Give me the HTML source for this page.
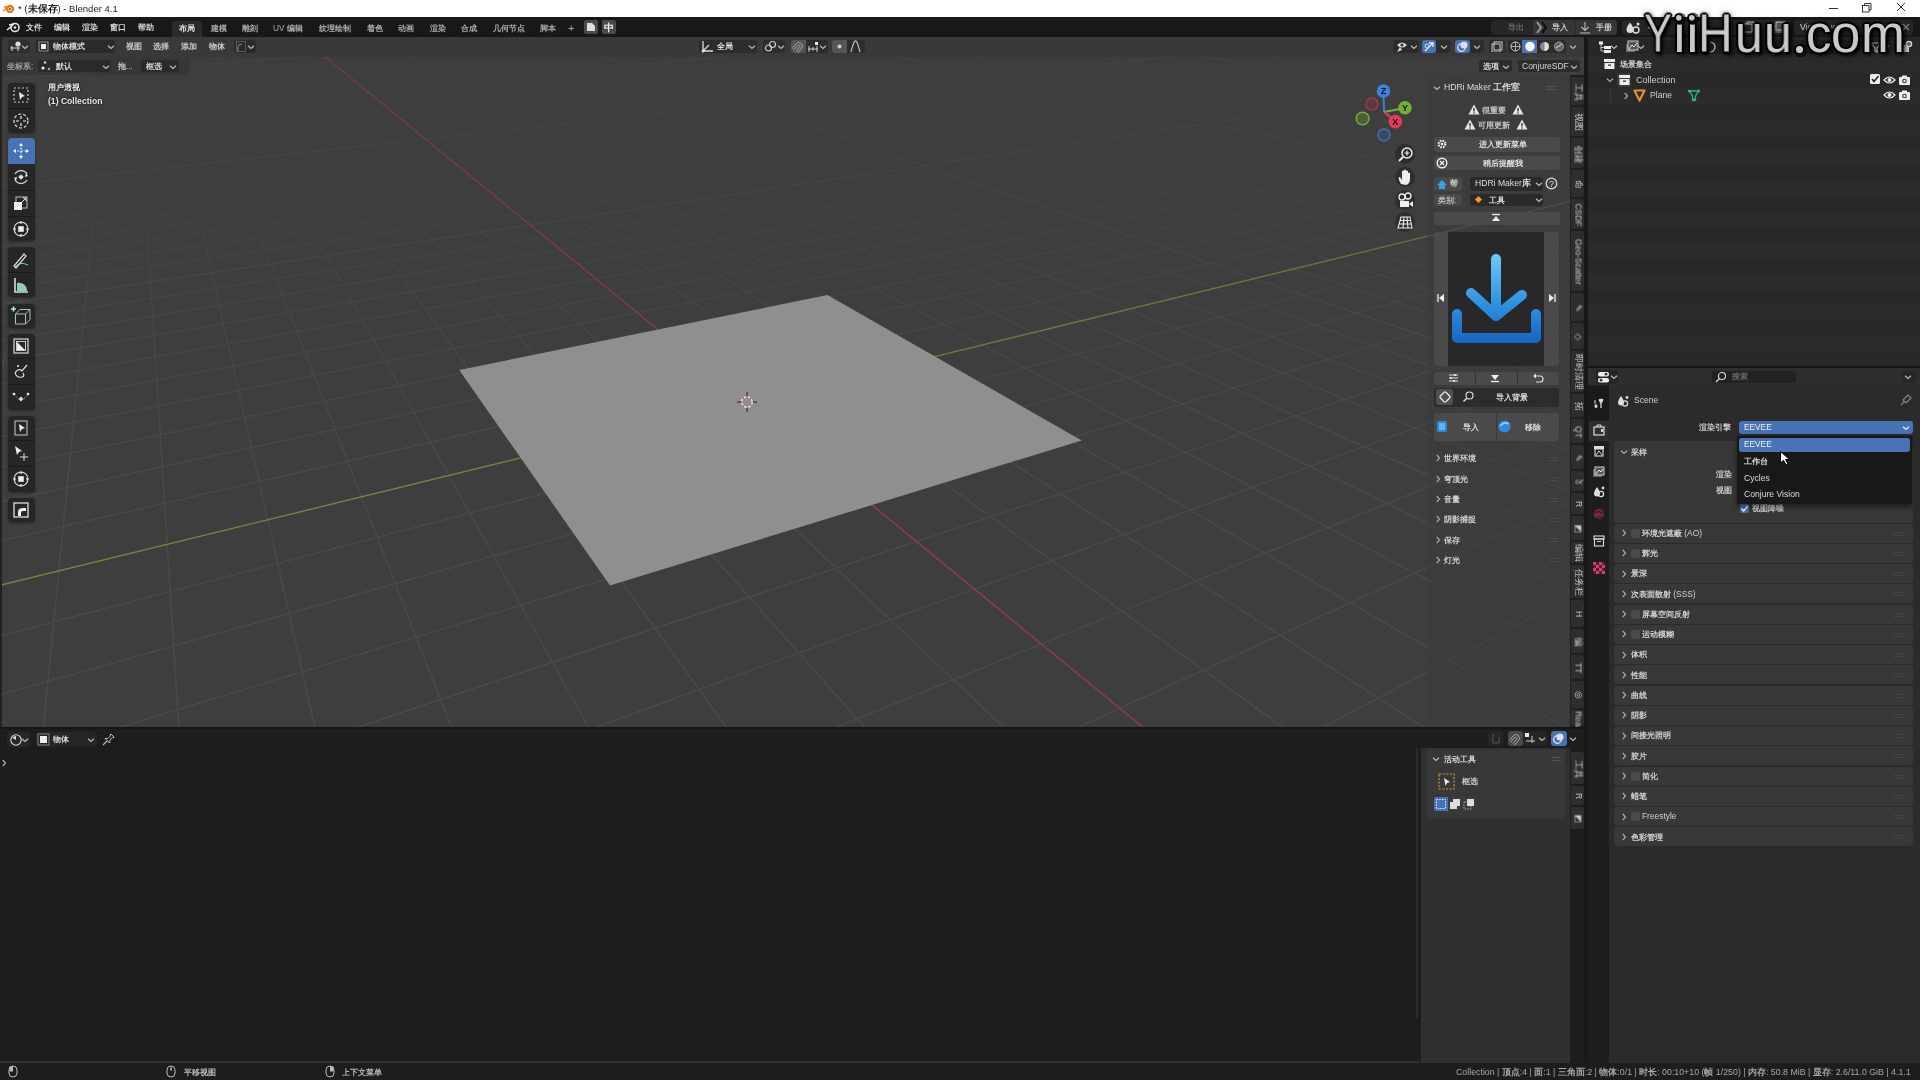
<!DOCTYPE html><html><head><meta charset="utf-8"><style>
html,body{margin:0;padding:0;width:1920px;height:1080px;overflow:hidden;background:#181818;font-family:"Liberation Sans",sans-serif;}
div,span,svg{position:absolute;}
.t{white-space:nowrap;line-height:1;will-change:transform;font-weight:500;}
.vt{writing-mode:vertical-rl;white-space:nowrap;line-height:1;position:absolute;}
</style></head><body>
<div style="left:0px;top:0px;width:1920px;height:17px;background:#ffffff;"></div>
<svg style="left:2px;top:2px;" width="14" height="13" viewBox="0 0 14 13"><circle cx="8" cy="7" r="4.2" fill="#e87d0d"/><circle cx="8" cy="7" r="1.8" fill="#fff"/><circle cx="8" cy="7" r="1.1" fill="#2a5d9c"/><path d="M1 9 L6 5 M2 5 L6 5" stroke="#e87d0d" stroke-width="1.6"/></svg>
<span class="t" style="left:18px;top:3.8px;font-size:9.5px;color:#1a1a1a;">* (<b style="font-weight:600">未保存</b>) - Blender 4.1</span>
<div style="left:1829px;top:8px;width:9px;height:1px;background:#333;"></div>
<svg style="left:1862px;top:3px;" width="10" height="10" viewBox="0 0 10 10"><rect x="0.5" y="2.5" width="6.5" height="6.5" fill="none" stroke="#333" stroke-width="1"/><path d="M2.5 2.5 V0.5 H9 V7 H7" fill="none" stroke="#333" stroke-width="1"/></svg>
<svg style="left:1896px;top:2px;" width="10" height="10" viewBox="0 0 10 10"><path d="M1 1 L9 9 M9 1 L1 9" stroke="#333" stroke-width="1"/></svg>
<div style="left:0px;top:17px;width:1920px;height:20px;background:#181818;"></div>
<svg style="left:6px;top:21px;" width="15" height="12" viewBox="0 0 15 12"><circle cx="9" cy="6.5" r="4" fill="none" stroke="#e6e6e6" stroke-width="1.6"/><circle cx="9" cy="6.5" r="1.3" fill="#e6e6e6"/><path d="M1 9 L7 4 M3 4 L8 3" stroke="#e6e6e6" stroke-width="1.5"/></svg>
<span class="t" style="left:26px;top:22.9px;font-size:8.3px;color:#d4d4d4;"><b style="font-weight:600">文件</b></span>
<span class="t" style="left:54px;top:22.9px;font-size:8.3px;color:#d4d4d4;"><b style="font-weight:600">编辑</b></span>
<span class="t" style="left:82px;top:22.9px;font-size:8.3px;color:#d4d4d4;"><b style="font-weight:600">渲染</b></span>
<span class="t" style="left:110px;top:22.9px;font-size:8.3px;color:#d4d4d4;"><b style="font-weight:600">窗口</b></span>
<span class="t" style="left:138px;top:22.9px;font-size:8.3px;color:#d4d4d4;"><b style="font-weight:600">帮助</b></span>
<div style="left:172px;top:21px;width:30px;height:16px;background:#2b2b2b;border-radius:3px 3px 0 0;"></div>
<span class="t" style="left:179px;top:23.9px;font-size:8.3px;color:#e0e0e0;"><b style="font-weight:600">布局</b></span>
<span class="t" style="left:211px;top:23.9px;font-size:8.3px;color:#a8a8a8;"><b style="font-weight:600">建模</b></span>
<span class="t" style="left:242px;top:23.9px;font-size:8.3px;color:#a8a8a8;"><b style="font-weight:600">雕刻</b></span>
<span class="t" style="left:273px;top:23.9px;font-size:8.3px;color:#a8a8a8;">UV <b style="font-weight:600">编辑</b></span>
<span class="t" style="left:319px;top:23.9px;font-size:8.3px;color:#a8a8a8;"><b style="font-weight:600">纹理绘制</b></span>
<span class="t" style="left:367px;top:23.9px;font-size:8.3px;color:#a8a8a8;"><b style="font-weight:600">着色</b></span>
<span class="t" style="left:398px;top:23.9px;font-size:8.3px;color:#a8a8a8;"><b style="font-weight:600">动画</b></span>
<span class="t" style="left:430px;top:23.9px;font-size:8.3px;color:#a8a8a8;"><b style="font-weight:600">渲染</b></span>
<span class="t" style="left:461px;top:23.9px;font-size:8.3px;color:#a8a8a8;"><b style="font-weight:600">合成</b></span>
<span class="t" style="left:493px;top:23.9px;font-size:8.3px;color:#a8a8a8;"><b style="font-weight:600">几何节点</b></span>
<span class="t" style="left:540px;top:23.9px;font-size:8.3px;color:#a8a8a8;"><b style="font-weight:600">脚本</b></span>
<span class="t" style="left:568px;top:22.5px;font-size:11px;color:#a8a8a8;">+</span>
<div style="left:584px;top:20px;width:14px;height:14px;background:#4a4a4a;border-radius:2px;"></div>
<svg style="left:586px;top:22px;" width="10" height="10" viewBox="0 0 10 10"><path d="M1 1 H6 L9 4 V9 H1 Z" fill="#ddd"/></svg>
<div style="left:602px;top:20px;width:14px;height:14px;background:#4a4a4a;border-radius:2px;"></div>
<span class="t" style="left:604px;top:22.5px;font-size:10px;color:#eee;"><b style="font-weight:600">中</b></span>
<div style="left:1491px;top:20px;width:126px;height:15px;background:#262626;border-radius:3px;"></div>
<div style="left:1533px;top:20px;width:84px;height:15px;background:#363636;border-radius:0 3px 3px 0;"></div>
<div style="left:1575px;top:20px;width:1px;height:15px;background:#2a2a2a;"></div>
<span class="t" style="left:1508px;top:22.9px;font-size:8.3px;color:#666;"><b style="font-weight:600">导出</b></span>
<svg style="left:1535px;top:20px;" width="14" height="15" viewBox="0 0 14 15"><path d="M2 2 L6 7.5 L2 13" stroke="#999" stroke-width="2" fill="none"/><path d="M7 2 L11 7.5 L7 13" stroke="#111" stroke-width="2.2" fill="none"/></svg>
<span class="t" style="left:1552px;top:22.9px;font-size:8.3px;color:#c8c8c8;"><b style="font-weight:600">导入</b></span>
<svg style="left:1579px;top:21px;" width="12" height="13" viewBox="0 0 12 13"><path d="M6 1 V9 M2.5 6 L6 9.5 L9.5 6 M1 12 H11" stroke="#bbb" stroke-width="1.1" fill="none"/></svg>
<span class="t" style="left:1596px;top:22.9px;font-size:8.3px;color:#c8c8c8;"><b style="font-weight:600">手册</b></span>
<div style="left:1622px;top:20px;width:38px;height:15px;background:#262626;border-radius:3px;"></div>
<svg style="left:1624px;top:21px;" width="20" height="13" viewBox="0 0 20 13"><path d="M6 1.5 Q9.5 6 9.5 8.5 A3.5 3.5 0 0 1 2.5 8.5 Q2.5 6 6 1.5 Z" fill="#ddd"/><circle cx="12" cy="9" r="3" fill="none" stroke="#ddd" stroke-width="1.3"/><circle cx="14" cy="3" r="1.5" fill="#ddd"/></svg>
<svg style="left:1647.0px;top:25.0px;" width="8" height="6" viewBox="0 0 8 6"><path d="M1 1.8 L4.0 4.5 L7 1.8" stroke="#bbb" stroke-width="1.2" fill="none"/></svg>
<div style="left:1664px;top:20px;width:36px;height:15px;background:#262626;border-radius:3px;"></div>
<div style="left:1704px;top:20px;width:86px;height:15px;background:#262626;border-radius:3px;"></div>
<svg style="left:1742px;top:21px;" width="13" height="13" viewBox="0 0 13 13"><rect x="2" y="3" width="8" height="8" fill="none" stroke="#bbb"/><path d="M5 3 V1 H12 V8 H10" fill="none" stroke="#bbb"/></svg>
<div style="left:1794px;top:20px;width:119px;height:15px;background:#262626;border-radius:3px;"></div>
<svg style="left:1773px;top:21px;" width="13" height="13" viewBox="0 0 13 13"><rect x="1" y="4" width="9" height="8" fill="#666"/><rect x="3" y="1" width="9" height="8" fill="#555" stroke="#ddd" stroke-width="0.9"/></svg>
<span class="t" style="left:1800px;top:23.2px;font-size:8.6px;color:#ddd;">ViewLayer</span>
<svg style="left:1901px;top:22px;" width="10" height="10" viewBox="0 0 10 10"><path d="M2 2 L8 8 M8 2 L2 8" stroke="#888" stroke-width="1.2"/></svg>
<div style="left:0px;top:37px;width:1587px;height:690px;background:#3e3e3e;"></div>
<svg width="1920" height="1080" style="position:absolute;left:0;top:0">
<defs>
<linearGradient id="fadeF" gradientUnits="userSpaceOnUse" x1="0" y1="37" x2="0" y2="727">
<stop offset="0" stop-color="#fff" stop-opacity="0"/><stop offset="0.16" stop-color="#fff" stop-opacity="0.15"/><stop offset="0.38" stop-color="#fff" stop-opacity="0.6"/><stop offset="0.6" stop-color="#fff" stop-opacity="0.95"/><stop offset="1" stop-color="#fff" stop-opacity="1"/></linearGradient>
<linearGradient id="fadeC" gradientUnits="userSpaceOnUse" x1="0" y1="37" x2="0" y2="500">
<stop offset="0" stop-color="#fff" stop-opacity="0.2"/><stop offset="0.5" stop-color="#fff" stop-opacity="0.55"/><stop offset="1" stop-color="#fff" stop-opacity="1"/></linearGradient>
<linearGradient id="fadeA" gradientUnits="userSpaceOnUse" x1="0" y1="37" x2="0" y2="500">
<stop offset="0" stop-color="#fff" stop-opacity="0.5"/><stop offset="1" stop-color="#fff" stop-opacity="1"/></linearGradient>
<mask id="mA"><rect x="0" y="0" width="1920" height="1080" fill="url(#fadeA)"/></mask>
<mask id="mF"><rect x="0" y="0" width="1920" height="1080" fill="url(#fadeF)"/></mask>
<mask id="mC"><rect x="0" y="0" width="1920" height="1080" fill="url(#fadeC)"/></mask>
<clipPath id="vc"><rect x="0" y="37" width="1587" height="690"/></clipPath></defs>
<g clip-path="url(#vc)">
<g mask="url(#mF)" stroke="#4a4a4a" stroke-width="1.5"><line x1="0.0" y1="37.7" x2="11.6" y2="37.0"/><line x1="0.0" y1="39.8" x2="44.8" y2="37.0"/><line x1="0.0" y1="41.9" x2="78.3" y2="37.0"/><line x1="0.0" y1="44.0" x2="112.0" y2="37.0"/><line x1="0.0" y1="46.3" x2="145.9" y2="37.0"/><line x1="0.0" y1="48.6" x2="180.0" y2="37.0"/><line x1="0.0" y1="53.4" x2="248.7" y2="37.0"/><line x1="0.0" y1="55.9" x2="283.5" y2="37.0"/><line x1="0.0" y1="58.6" x2="318.4" y2="37.0"/><line x1="0.0" y1="61.3" x2="353.5" y2="37.0"/><line x1="0.0" y1="64.0" x2="388.9" y2="37.0"/><line x1="0.0" y1="66.9" x2="424.5" y2="37.0"/><line x1="0.0" y1="69.9" x2="460.3" y2="37.0"/><line x1="0.0" y1="73.0" x2="496.3" y2="37.0"/><line x1="0.0" y1="76.2" x2="532.5" y2="37.0"/><line x1="0.0" y1="83.0" x2="605.7" y2="37.0"/><line x1="0.0" y1="86.5" x2="642.6" y2="37.0"/><line x1="0.0" y1="90.3" x2="679.8" y2="37.0"/><line x1="0.0" y1="94.1" x2="717.2" y2="37.0"/><line x1="0.0" y1="98.1" x2="754.8" y2="37.0"/><line x1="0.0" y1="102.3" x2="792.7" y2="37.0"/><line x1="0.0" y1="106.7" x2="830.8" y2="37.0"/><line x1="0.0" y1="111.2" x2="869.2" y2="37.0"/><line x1="0.0" y1="116.0" x2="907.8" y2="37.0"/><line x1="0.0" y1="126.1" x2="985.8" y2="37.0"/><line x1="0.0" y1="131.5" x2="1025.2" y2="37.0"/><line x1="0.0" y1="137.2" x2="1064.8" y2="37.0"/><line x1="0.0" y1="143.2" x2="1104.7" y2="37.0"/><line x1="0.0" y1="149.4" x2="1144.9" y2="37.0"/><line x1="0.0" y1="156.0" x2="1185.3" y2="37.0"/><line x1="0.0" y1="163.0" x2="1226.0" y2="37.0"/><line x1="0.0" y1="170.3" x2="1266.9" y2="37.0"/><line x1="0.0" y1="178.0" x2="1308.2" y2="37.0"/><line x1="0.0" y1="194.9" x2="1391.4" y2="37.0"/><line x1="0.0" y1="204.1" x2="1433.5" y2="37.0"/><line x1="0.0" y1="213.9" x2="1475.9" y2="37.0"/><line x1="0.0" y1="224.3" x2="1518.5" y2="37.0"/><line x1="0.0" y1="235.4" x2="1561.4" y2="37.0"/><line x1="0.0" y1="247.3" x2="1587.0" y2="39.3"/><line x1="0.0" y1="260.1" x2="1587.0" y2="45.3"/><line x1="0.0" y1="273.8" x2="1587.0" y2="51.7"/><line x1="0.0" y1="63.0" x2="19.3" y2="37.0"/><line x1="0.0" y1="288.6" x2="1587.0" y2="58.6"/><line x1="0.0" y1="109.5" x2="42.2" y2="37.0"/><line x1="0.0" y1="322.0" x2="1587.0" y2="74.2"/><line x1="0.0" y1="376.2" x2="88.4" y2="37.0"/><line x1="0.0" y1="340.9" x2="1587.0" y2="83.0"/><line x1="111.6" y1="37.0" x2="43.4" y2="727.0"/><line x1="0.0" y1="361.5" x2="1587.0" y2="92.7"/><line x1="135.0" y1="37.0" x2="178.8" y2="727.0"/><line x1="0.0" y1="384.2" x2="1587.0" y2="103.3"/><line x1="158.4" y1="37.0" x2="314.8" y2="727.0"/><line x1="0.0" y1="409.1" x2="1587.0" y2="114.9"/><line x1="181.9" y1="37.0" x2="451.3" y2="727.0"/><line x1="0.0" y1="436.8" x2="1587.0" y2="127.8"/><line x1="205.5" y1="37.0" x2="588.5" y2="727.0"/><line x1="0.0" y1="467.5" x2="1587.0" y2="142.2"/><line x1="229.3" y1="37.0" x2="726.1" y2="727.0"/><line x1="0.0" y1="502.0" x2="1587.0" y2="158.3"/><line x1="253.1" y1="37.0" x2="864.4" y2="727.0"/><line x1="0.0" y1="541.0" x2="1587.0" y2="176.5"/><line x1="277.0" y1="37.0" x2="1003.3" y2="727.0"/><line x1="0.0" y1="636.0" x2="1587.0" y2="220.9"/><line x1="325.1" y1="37.0" x2="1282.7" y2="727.0"/><line x1="0.0" y1="694.8" x2="1587.0" y2="248.4"/><line x1="349.4" y1="37.0" x2="1423.3" y2="727.0"/><line x1="1587.0" y1="280.6" x2="120.8" y2="727.0"/><line x1="373.7" y1="37.0" x2="1564.5" y2="727.0"/><line x1="1587.0" y1="318.9" x2="357.8" y2="727.0"/><line x1="1587.0" y1="664.0" x2="398.1" y2="37.0"/><line x1="1587.0" y1="365.2" x2="596.4" y2="727.0"/><line x1="1587.0" y1="600.3" x2="422.7" y2="37.0"/><line x1="1587.0" y1="422.3" x2="836.9" y2="727.0"/><line x1="1587.0" y1="546.2" x2="447.3" y2="37.0"/><line x1="1587.0" y1="494.4" x2="1079.1" y2="727.0"/><line x1="1587.0" y1="499.5" x2="472.1" y2="37.0"/><line x1="1587.0" y1="588.3" x2="1323.1" y2="727.0"/><line x1="1587.0" y1="458.9" x2="496.9" y2="37.0"/><line x1="1587.0" y1="715.8" x2="1568.9" y2="727.0"/><line x1="1587.0" y1="423.3" x2="521.9" y2="37.0"/><line x1="1587.0" y1="363.6" x2="572.1" y2="37.0"/><line x1="1587.0" y1="338.4" x2="597.4" y2="37.0"/><line x1="1587.0" y1="315.6" x2="622.8" y2="37.0"/><line x1="1587.0" y1="295.0" x2="648.3" y2="37.0"/><line x1="1587.0" y1="276.3" x2="673.9" y2="37.0"/><line x1="1587.0" y1="259.1" x2="699.7" y2="37.0"/><line x1="1587.0" y1="243.3" x2="725.5" y2="37.0"/><line x1="1587.0" y1="228.8" x2="751.5" y2="37.0"/><line x1="1587.0" y1="215.4" x2="777.5" y2="37.0"/><line x1="1587.0" y1="191.4" x2="830.0" y2="37.0"/><line x1="1587.0" y1="180.6" x2="856.4" y2="37.0"/><line x1="1587.0" y1="170.5" x2="883.0" y2="37.0"/><line x1="1587.0" y1="161.1" x2="909.6" y2="37.0"/><line x1="1587.0" y1="152.3" x2="936.4" y2="37.0"/><line x1="1587.0" y1="144.0" x2="963.3" y2="37.0"/><line x1="1587.0" y1="136.1" x2="990.3" y2="37.0"/><line x1="1587.0" y1="128.7" x2="1017.4" y2="37.0"/><line x1="1587.0" y1="121.8" x2="1044.7" y2="37.0"/><line x1="1587.0" y1="108.9" x2="1099.6" y2="37.0"/><line x1="1587.0" y1="102.9" x2="1127.2" y2="37.0"/><line x1="1587.0" y1="97.3" x2="1155.0" y2="37.0"/><line x1="1587.0" y1="91.9" x2="1182.8" y2="37.0"/><line x1="1587.0" y1="86.8" x2="1210.8" y2="37.0"/><line x1="1587.0" y1="81.9" x2="1239.0" y2="37.0"/><line x1="1587.0" y1="77.2" x2="1267.2" y2="37.0"/><line x1="1587.0" y1="72.8" x2="1295.6" y2="37.0"/><line x1="1587.0" y1="68.5" x2="1324.1" y2="37.0"/><line x1="1587.0" y1="60.5" x2="1381.6" y2="37.0"/><line x1="1587.0" y1="56.7" x2="1410.5" y2="37.0"/><line x1="1587.0" y1="53.1" x2="1439.6" y2="37.0"/><line x1="1587.0" y1="49.6" x2="1468.7" y2="37.0"/><line x1="1587.0" y1="46.3" x2="1498.1" y2="37.0"/><line x1="1587.0" y1="43.1" x2="1527.5" y2="37.0"/><line x1="1587.0" y1="40.0" x2="1557.1" y2="37.0"/><line x1="1587.0" y1="37.0" x2="1586.9" y2="37.0"/></g>
<g mask="url(#mC)" stroke="#4c4c4c" stroke-width="1.5"><line x1="0.0" y1="51.0" x2="214.2" y2="37.0"/><line x1="0.0" y1="79.5" x2="569.0" y2="37.0"/><line x1="0.0" y1="120.9" x2="946.7" y2="37.0"/><line x1="0.0" y1="186.2" x2="1349.7" y2="37.0"/><line x1="0.0" y1="304.6" x2="1587.0" y2="66.1"/><line x1="0.0" y1="191.8" x2="65.3" y2="37.0"/><line x1="1587.0" y1="391.7" x2="547.0" y2="37.0"/><line x1="1587.0" y1="203.0" x2="803.7" y2="37.0"/><line x1="1587.0" y1="115.2" x2="1072.1" y2="37.0"/><line x1="1587.0" y1="64.4" x2="1352.8" y2="37.0"/></g>
<g mask="url(#mA)"><line x1="301.0" y1="37.0" x2="1142.7" y2="727.0" stroke="#983a50" stroke-width="1.4"/><line x1="0.0" y1="585.2" x2="1587.0" y2="197.2" stroke="#74883e" stroke-width="1.4"/></g>
<polygon points="1081.7,440.5 610.0,585.6 459.2,370.0 827.5,295.0" fill="#8f8f8f"/>
</g></svg>
<div style="left:0px;top:37px;width:1587px;height:20px;background:#393939;"></div>
<div style="left:0px;top:57px;width:190px;height:18px;background:rgba(30,30,30,0.22);"></div>
<div style="left:8px;top:40px;width:22px;height:13px;background:#2e2e2e;border-radius:3px;"></div>
<svg style="left:9px;top:40px;" width="14" height="13" viewBox="0 0 14 13"><circle cx="9" cy="4" r="2.6" fill="#ddd"/><path d="M1 8 H11 M3 6 V11 M9 7 V11" stroke="#ccc" stroke-width="1.2"/></svg>
<svg style="left:21.0px;top:44.0px;" width="8" height="6" viewBox="0 0 8 6"><path d="M1 1.8 L4.0 4.5 L7 1.8" stroke="#bbb" stroke-width="1.2" fill="none"/></svg>
<div style="left:36px;top:40px;width:79px;height:13px;background:#2a2a2a;border-radius:3px;"></div>
<svg style="left:38px;top:41px;" width="11" height="11" viewBox="0 0 11 11"><rect x="1" y="1" width="9" height="9" fill="none" stroke="#aaa" stroke-width="0.8"/><rect x="3" y="3" width="5" height="5" fill="#eee"/></svg>
<span class="t" style="left:53px;top:42.4px;font-size:8.3px;color:#d8d8d8;"><b style="font-weight:600">物体模式</b></span>
<svg style="left:107.0px;top:44.0px;" width="8" height="6" viewBox="0 0 8 6"><path d="M1 1.8 L4.0 4.5 L7 1.8" stroke="#bbb" stroke-width="1.2" fill="none"/></svg>
<span class="t" style="left:126px;top:42.4px;font-size:8.3px;color:#c8c8c8;"><b style="font-weight:600">视图</b></span>
<span class="t" style="left:153px;top:42.4px;font-size:8.3px;color:#c8c8c8;"><b style="font-weight:600">选择</b></span>
<span class="t" style="left:181px;top:42.4px;font-size:8.3px;color:#c8c8c8;"><b style="font-weight:600">添加</b></span>
<span class="t" style="left:209px;top:42.4px;font-size:8.3px;color:#c8c8c8;"><b style="font-weight:600">物体</b></span>
<div style="left:234px;top:40px;width:22px;height:13px;background:#2a2a2a;border-radius:3px;"></div>
<svg style="left:236px;top:41px;" width="10" height="11" viewBox="0 0 10 11"><rect x="0.5" y="0.5" width="9" height="10" fill="none" stroke="#666" stroke-width="0.8"/><path d="M2 10 V6 Q2 3 6 3" stroke="#888" fill="none"/></svg>
<svg style="left:247.0px;top:44.0px;" width="8" height="6" viewBox="0 0 8 6"><path d="M1 1.8 L4.0 4.5 L7 1.8" stroke="#bbb" stroke-width="1.2" fill="none"/></svg>
<div style="left:699px;top:40px;width:58px;height:13px;background:#2c2c2c;border-radius:3px;"></div>
<svg style="left:701px;top:40px;" width="13" height="13" viewBox="0 0 13 13"><path d="M2 1 V11 H12 M2 11 L8 5" stroke="#ddd" stroke-width="1.3" fill="none"/><circle cx="2" cy="11" r="1.5" fill="#ddd"/></svg>
<span class="t" style="left:717px;top:42.4px;font-size:8.3px;color:#ddd;"><b style="font-weight:600">全局</b></span>
<svg style="left:748.0px;top:44.0px;" width="8" height="6" viewBox="0 0 8 6"><path d="M1 1.8 L4.0 4.5 L7 1.8" stroke="#bbb" stroke-width="1.2" fill="none"/></svg>
<div style="left:763px;top:40px;width:22px;height:13px;background:#2c2c2c;border-radius:3px;"></div>
<svg style="left:764px;top:40px;" width="13" height="13" viewBox="0 0 13 13"><circle cx="4.5" cy="8" r="3" fill="none" stroke="#ccc" stroke-width="1.2"/><circle cx="8.5" cy="4.5" r="3" fill="none" stroke="#ccc" stroke-width="1.2"/></svg>
<svg style="left:777.0px;top:44.0px;" width="8" height="6" viewBox="0 0 8 6"><path d="M1 1.8 L4.0 4.5 L7 1.8" stroke="#bbb" stroke-width="1.2" fill="none"/></svg>
<div style="left:791px;top:40px;width:15px;height:13px;background:#555;border-radius:3px 0 0 3px;"></div>
<svg style="left:792px;top:40px;" width="13" height="13" viewBox="0 0 13 13"><g transform="rotate(40 6.5 6.5)"><path d="M3 12 V6 A3.5 3.5 0 0 1 10 6 V12 M5.2 12 V6.5 A1.3 1.3 0 0 1 7.8 6.5 V12" stroke="#aaa" stroke-width="0.9" fill="none"/></g></svg>
<div style="left:806px;top:40px;width:22px;height:13px;background:#2c2c2c;border-radius:0 3px 3px 0;"></div>
<svg style="left:807px;top:41px;" width="13" height="12" viewBox="0 0 13 12"><path d="M1 8 H11 M2 5 V11 M10 5 V11 M6 6 V10" stroke="#ccc" stroke-width="1"/><rect x="8" y="1" width="3" height="3" fill="#eee"/></svg>
<svg style="left:819.0px;top:44.0px;" width="8" height="6" viewBox="0 0 8 6"><path d="M1 1.8 L4.0 4.5 L7 1.8" stroke="#bbb" stroke-width="1.2" fill="none"/></svg>
<div style="left:832px;top:40px;width:15px;height:13px;background:#555;border-radius:3px 0 0 3px;"></div>
<svg style="left:834px;top:41px;" width="11" height="11" viewBox="0 0 11 11"><circle cx="5.5" cy="5.5" r="2" fill="#ccc"/></svg>
<div style="left:847px;top:40px;width:18px;height:13px;background:#2c2c2c;border-radius:0 3px 3px 0;"></div>
<svg style="left:849px;top:40px;" width="13" height="13" viewBox="0 0 13 13"><path d="M2 12 Q5 0 6.5 1 Q8 0 11 12" stroke="#bbb" stroke-width="1.2" fill="none"/></svg>
<div style="left:1393px;top:40px;width:26px;height:13px;background:#2c2c2c;border-radius:3px;"></div>
<svg style="left:1395px;top:40px;" width="14" height="13" viewBox="0 0 14 13"><path d="M2 5 Q7 0 12 5 Q7 10 2 5 Z" fill="#ddd"/><circle cx="7" cy="5" r="1.6" fill="#333"/><path d="M2 12 L5 7 L7 10" fill="#ddd"/></svg>
<svg style="left:1410.0px;top:44.0px;" width="8" height="6" viewBox="0 0 8 6"><path d="M1 1.8 L4.0 4.5 L7 1.8" stroke="#bbb" stroke-width="1.2" fill="none"/></svg>
<div style="left:1422px;top:40px;width:14px;height:13px;background:#4772b3;border-radius:3px;"></div>
<svg style="left:1423px;top:40px;" width="13" height="13" viewBox="0 0 13 13"><path d="M2 11 L10 3 M6 3 H10 V7" stroke="#eee" stroke-width="1.3" fill="none"/><circle cx="4" cy="6" r="2" fill="none" stroke="#cde" stroke-width="1"/></svg>
<div style="left:1436px;top:40px;width:14px;height:13px;background:#2c2c2c;border-radius:0 3px 3px 0;"></div>
<svg style="left:1440.0px;top:44.0px;" width="8" height="6" viewBox="0 0 8 6"><path d="M1 1.8 L4.0 4.5 L7 1.8" stroke="#bbb" stroke-width="1.2" fill="none"/></svg>
<div style="left:1455px;top:40px;width:15px;height:13px;background:#4772b3;border-radius:3px;"></div>
<svg style="left:1456px;top:40px;" width="13" height="13" viewBox="0 0 13 13"><circle cx="5.5" cy="7.5" r="3.8" fill="none" stroke="#eee" stroke-width="1.2"/><circle cx="8" cy="5" r="3.6" fill="#dde"/></svg>
<div style="left:1470px;top:40px;width:14px;height:13px;background:#2c2c2c;border-radius:0 3px 3px 0;"></div>
<svg style="left:1473.0px;top:44.0px;" width="8" height="6" viewBox="0 0 8 6"><path d="M1 1.8 L4.0 4.5 L7 1.8" stroke="#bbb" stroke-width="1.2" fill="none"/></svg>
<div style="left:1489px;top:40px;width:16px;height:13px;background:#2c2c2c;border-radius:3px;"></div>
<svg style="left:1491px;top:41px;" width="12" height="11" viewBox="0 0 12 11"><rect x="3" y="1" width="8" height="8" fill="none" stroke="#ccc" stroke-width="1"/><rect x="1" y="3" width="8" height="8" fill="none" stroke="#ccc" stroke-width="1"/></svg>
<div style="left:1508px;top:40px;width:58px;height:13px;background:#2c2c2c;border-radius:3px;"></div>
<div style="left:1522px;top:40px;width:15px;height:13px;background:#4772b3;"></div>
<svg style="left:1509px;top:40px;" width="57" height="13" viewBox="0 0 57 13"><circle cx="6.5" cy="6.5" r="4.5" fill="none" stroke="#ccc" stroke-width="1"/><path d="M2 6.5 H11 M6.5 2 V11" stroke="#ccc" stroke-width="0.8"/><circle cx="21" cy="6.5" r="4.8" fill="#f4f4ff"/><circle cx="35.5" cy="6.5" r="4.5" fill="#888"/><path d="M35.5 2 A4.5 4.5 0 0 1 35.5 11 Z" fill="#ddd"/><circle cx="50" cy="6.5" r="4.5" fill="#666" stroke="#aaa" stroke-width="0.8"/><path d="M47 8 L53 4" stroke="#ddd" stroke-width="1"/></svg>
<svg style="left:1569.0px;top:44.0px;" width="8" height="6" viewBox="0 0 8 6"><path d="M1 1.8 L4.0 4.5 L7 1.8" stroke="#bbb" stroke-width="1.2" fill="none"/></svg>
<span class="t" style="left:7px;top:61.9px;font-size:8.3px;color:#a0a0a0;"><b style="font-weight:600">坐标系</b>:</span>
<div style="left:38px;top:60px;width:73px;height:12px;background:#2a2a2a;border-radius:3px;"></div>
<svg style="left:40px;top:60px;" width="12" height="12" viewBox="0 0 12 12"><circle cx="5" cy="2.5" r="1.3" fill="#ccc"/><circle cx="3" cy="8" r="1.6" fill="#eee"/><circle cx="9" cy="9" r="1.2" fill="#aaa"/></svg>
<span class="t" style="left:56px;top:61.9px;font-size:8.3px;color:#d8d8d8;"><b style="font-weight:600">默认</b></span>
<svg style="left:102.0px;top:63.5px;" width="8" height="6" viewBox="0 0 8 6"><path d="M1 1.8 L4.0 4.5 L7 1.8" stroke="#bbb" stroke-width="1.2" fill="none"/></svg>
<span class="t" style="left:118px;top:61.9px;font-size:8.3px;color:#c0c0c0;"><b style="font-weight:600">拖</b>...</span>
<div style="left:141px;top:60px;width:38px;height:12px;background:#2a2a2a;border-radius:3px;"></div>
<span class="t" style="left:146px;top:61.9px;font-size:8.3px;color:#d8d8d8;"><b style="font-weight:600">框选</b></span>
<svg style="left:169.0px;top:63.5px;" width="8" height="6" viewBox="0 0 8 6"><path d="M1 1.8 L4.0 4.5 L7 1.8" stroke="#bbb" stroke-width="1.2" fill="none"/></svg>
<div style="left:1479px;top:60px;width:33px;height:12px;background:#2c2c2c;border-radius:3px;"></div>
<span class="t" style="left:1483px;top:61.9px;font-size:8.3px;color:#d8d8d8;"><b style="font-weight:600">选项</b></span>
<svg style="left:1502.0px;top:63.5px;" width="8" height="6" viewBox="0 0 8 6"><path d="M1 1.8 L4.0 4.5 L7 1.8" stroke="#bbb" stroke-width="1.2" fill="none"/></svg>
<div style="left:1518px;top:60px;width:62px;height:12px;background:#2c2c2c;border-radius:3px;"></div>
<span class="t" style="left:1522px;top:61.8px;font-size:8.5px;color:#d8d8d8;">ConjureSDF</span>
<svg style="left:1570.0px;top:63.5px;" width="8" height="6" viewBox="0 0 8 6"><path d="M1 1.8 L4.0 4.5 L7 1.8" stroke="#bbb" stroke-width="1.2" fill="none"/></svg>
<div style="left:0px;top:37px;width:1.5px;height:690px;background:#222;"></div>
<span class="t" style="left:48px;top:83.3px;font-size:8.3px;color:#e8e8e8;text-shadow:0 0 2px #000;"><b style="font-weight:600">用户透视</b></span>
<span class="t" style="left:48px;top:97.2px;font-size:8.6px;color:#e8e8e8;font-weight:bold;text-shadow:0 0 2px #000;">(1) Collection</span>
<div style="left:8px;top:83px;width:27px;height:50px;background:#262626;border-radius:4px;box-shadow:0 1px 3px rgba(0,0,0,0.35);"></div>
<div style="left:8px;top:138px;width:27px;height:103px;background:#262626;border-radius:4px;box-shadow:0 1px 3px rgba(0,0,0,0.35);"></div>
<div style="left:8px;top:247px;width:27px;height:50px;background:#262626;border-radius:4px;box-shadow:0 1px 3px rgba(0,0,0,0.35);"></div>
<div style="left:8px;top:304px;width:27px;height:24px;background:#262626;border-radius:4px;box-shadow:0 1px 3px rgba(0,0,0,0.35);"></div>
<div style="left:8px;top:334px;width:27px;height:75.5px;background:#262626;border-radius:4px;box-shadow:0 1px 3px rgba(0,0,0,0.35);"></div>
<div style="left:8px;top:416px;width:27px;height:75.5px;background:#262626;border-radius:4px;box-shadow:0 1px 3px rgba(0,0,0,0.35);"></div>
<div style="left:8px;top:498px;width:27px;height:24px;background:#262626;border-radius:4px;box-shadow:0 1px 3px rgba(0,0,0,0.35);"></div>
<div style="left:8px;top:138px;width:27px;height:25.5px;background:#4772b3;border-radius:4px 4px 0 0;"></div>
<div style="left:8px;top:108.0px;width:27px;height:1px;background:#1a1a1a;"></div>
<div style="left:8px;top:190.0px;width:27px;height:1px;background:#1a1a1a;"></div>
<div style="left:8px;top:216.0px;width:27px;height:1px;background:#1a1a1a;"></div>
<div style="left:8px;top:272.0px;width:27px;height:1px;background:#1a1a1a;"></div>
<div style="left:8px;top:358.0px;width:27px;height:1px;background:#1a1a1a;"></div>
<div style="left:8px;top:383.5px;width:27px;height:1px;background:#1a1a1a;"></div>
<div style="left:8px;top:440.0px;width:27px;height:1px;background:#1a1a1a;"></div>
<div style="left:8px;top:465.5px;width:27px;height:1px;background:#1a1a1a;"></div>
<svg style="left:9.8px;top:84.25px;" width="22" height="22" viewBox="0 0 22 22"><rect x="4" y="4" width="14" height="14" fill="none" stroke="#ccc" stroke-width="1.2" stroke-dasharray="2 2"/><path d="M9 8 L15 12 L12 13 L10 16 Z" fill="#eee"/></svg>
<svg style="left:9.8px;top:109.75px;" width="22" height="22" viewBox="0 0 22 22"><circle cx="11" cy="11" r="7" fill="none" stroke="#ddd" stroke-width="1.2" stroke-dasharray="3 2"/><path d="M11 6 V9 M11 13 V16 M6 11 H9 M13 11 H16" stroke="#eee" stroke-width="1.2"/></svg>
<svg style="left:9.8px;top:139.75px;" width="22" height="22" viewBox="0 0 22 22"><path d="M11 4 V18 M4 11 H18" stroke="#e8f0ff" stroke-width="1.2" stroke-dasharray="2 1.5"/><path d="M11 3 L9 6 H13 Z M11 19 L9 16 H13 Z M3 11 L6 9 V13 Z M19 11 L16 9 V13 Z" fill="#fff"/></svg>
<svg style="left:9.8px;top:166.25px;" width="22" height="22" viewBox="0 0 22 22"><path d="M5 8 A7 7 0 0 1 17 8 M17 14 A7 7 0 0 1 5 14" fill="none" stroke="#ddd" stroke-width="1.2"/><rect x="9" y="9" width="4" height="4" transform="rotate(45 11 11)" fill="#ddd"/><path d="M4 12 L6 15 L7 11 Z M18 10 L16 7 L15 11Z" fill="#eee"/></svg>
<svg style="left:9.8px;top:192.0px;" width="22" height="22" viewBox="0 0 22 22"><rect x="6" y="5" width="11" height="11" fill="none" stroke="#bbb" stroke-width="1"/><rect x="4" y="10" width="8" height="8" fill="#eee"/><path d="M12 10 L16 6 M13 6 H16 V9" stroke="#eee" stroke-width="1"/></svg>
<svg style="left:9.8px;top:217.75px;" width="22" height="22" viewBox="0 0 22 22"><circle cx="11" cy="11" r="7" fill="none" stroke="#ddd" stroke-width="1.1"/><rect x="8.2" y="8.2" width="5.6" height="5.6" fill="#eee"/><path d="M11 3 L9.3 5.5 H12.7 Z M11 19 L9.3 16.5 H12.7 Z M3 11 L5.5 9.3 V12.7 Z M19 11 L16.5 9.3 V12.7 Z" fill="#eee"/></svg>
<svg style="left:9.8px;top:248.5px;" width="22" height="22" viewBox="0 0 22 22"><path d="M4 17 L14 5 L16 7 L6 19 Z" fill="none" stroke="#ddd" stroke-width="1.2"/><path d="M5 18 Q10 12 18 16" stroke="#9ee" fill="none" stroke-width="0.8"/></svg>
<svg style="left:9.8px;top:273.75px;" width="22" height="22" viewBox="0 0 22 22"><path d="M5 4 V18 H18" stroke="#ddd" stroke-width="1.6" fill="none"/><path d="M7 17 V9 A8 8 0 0 1 17 17 Z" fill="#8fd1b8"/></svg>
<svg style="left:9.8px;top:305.0px;" width="22" height="22" viewBox="0 0 22 22"><path d="M5.5 9 L10 4.5 H20 V14.5 L15.5 19 H5.5 Z M5.5 9 H15.5 V19 M15.5 9 L20 4.5" fill="none" stroke="#aac4b8" stroke-width="1"/><path d="M1 4 H6 M3.5 1.5 V6.5" stroke="#bfe8d8" stroke-width="1.5"/></svg>
<svg style="left:9.8px;top:335.25px;" width="22" height="22" viewBox="0 0 22 22"><rect x="4" y="4" width="14" height="14" fill="none" stroke="#ccc" stroke-width="1.3"/><rect x="6.5" y="6.5" width="9" height="9" fill="none" stroke="#ddd" stroke-width="0.9"/><path d="M7 7 L15 15 H7 Z" fill="#f0f0f0"/></svg>
<svg style="left:9.8px;top:360.25px;" width="22" height="22" viewBox="0 0 22 22"><path d="M17 5 L12 11 Q11 9 8 10 Q4 12 6 15 Q8 18 12 17 Q15 16 13 13" fill="none" stroke="#ddd" stroke-width="1.2"/><rect x="7" y="5" width="2" height="2" fill="#9cc7ff"/></svg>
<svg style="left:9.8px;top:385.75px;" width="22" height="22" viewBox="0 0 22 22"><path d="M4 8 Q11 19 18 8" fill="none" stroke="#bbb" stroke-width="0.9" stroke-dasharray="1.5 1.5"/><circle cx="4" cy="8" r="1.3" fill="#eee"/><circle cx="18" cy="8" r="1.3" fill="#eee"/><rect x="9.3" y="11.3" width="3.4" height="3.4" transform="rotate(45 11 13)" fill="#bfeedd"/></svg>
<svg style="left:9.8px;top:417.25px;" width="22" height="22" viewBox="0 0 22 22"><rect x="5" y="4" width="12" height="14" fill="none" stroke="#ccc" stroke-width="1"/><path d="M9 7 L15 11 L12 12 L10 15 Z" fill="#eee"/></svg>
<svg style="left:9.8px;top:442.25px;" width="22" height="22" viewBox="0 0 22 22"><path d="M5 4 L12 9 L9 10 L7 13 Z" fill="#eee"/><path d="M14 11 V19 M10 15 H18" stroke="#ddd" stroke-width="1"/></svg>
<svg style="left:9.8px;top:467.75px;" width="22" height="22" viewBox="0 0 22 22"><circle cx="11" cy="11" r="7" fill="none" stroke="#ddd" stroke-width="1.1"/><rect x="8.2" y="8.2" width="5.6" height="5.6" fill="#eee"/><path d="M11 3 L9.3 5.5 H12.7 Z M11 19 L9.3 16.5 H12.7 Z M3 11 L5.5 9.3 V12.7 Z M19 11 L16.5 9.3 V12.7 Z" fill="#eee"/></svg>
<svg style="left:9.8px;top:499.0px;" width="22" height="22" viewBox="0 0 22 22"><rect x="4" y="4" width="14" height="14" fill="none" stroke="#ddd" stroke-width="1.3"/><path d="M8 17 V13 Q8 9 13 9 H16 V12 H13 Q11 12 11 14 V17 Z" fill="#eee"/></svg>
<svg style="left:1340px;top:75px;font-family:"Liberation Sans",sans-serif;" width="90" height="80" viewBox="0 0 90 80">
<line x1="44" y1="37" x2="43.5" y2="16" stroke="#3d7fd0" stroke-width="2"/>
<line x1="44" y1="37" x2="65" y2="33" stroke="#7bb23a" stroke-width="2"/>
<line x1="44" y1="37" x2="55" y2="46" stroke="#d8405a" stroke-width="2"/>
<circle cx="32" cy="29" r="6" fill="rgba(160,50,70,0.25)" stroke="#9a3a4c" stroke-width="1.5"/>
<circle cx="22.6" cy="43.5" r="6.3" fill="rgba(100,150,40,0.35)" stroke="#79a83a" stroke-width="1.6"/>
<circle cx="44" cy="60" r="6" fill="rgba(50,100,170,0.3)" stroke="#3f6fb0" stroke-width="1.5"/>
<circle cx="43.5" cy="16" r="6.8" fill="#3b82d8"/>
<circle cx="65" cy="32.8" r="6.8" fill="#74b02f"/>
<circle cx="55.3" cy="46.6" r="6.8" fill="#e43a5c"/>
<text x="43.5" y="19.3" font-size="9" font-weight="bold" text-anchor="middle" fill="#112">Z</text>
<text x="65" y="36.1" font-size="9" font-weight="bold" text-anchor="middle" fill="#112">Y</text>
<text x="55.3" y="49.9" font-size="9" font-weight="bold" text-anchor="middle" fill="#300">X</text>
</svg>
<div style="left:1395px;top:144.4px;width:20px;height:20px;background:rgba(25,25,25,0.45);border-radius:50%;"></div>
<svg style="left:1394px;top:143.4px;" width="22" height="22" viewBox="0 0 22 22"><circle cx="13" cy="10" r="5" fill="none" stroke="#eee" stroke-width="1.5"/><path d="M13 7.5 V12.5 M10.5 10 H15.5" stroke="#eee" stroke-width="1.2"/><path d="M9 14 L5 18" stroke="#eee" stroke-width="2"/></svg>
<div style="left:1395px;top:166.6px;width:20px;height:20px;background:rgba(25,25,25,0.45);border-radius:50%;"></div>
<svg style="left:1394px;top:165.6px;" width="22" height="22" viewBox="0 0 22 22"><path d="M7 18 Q4 13 5 11 L6 11 L8 14 V5 Q9 4 10 5 V10 V4 Q11 3 12 4 V10 V5 Q13 4 14 5 V11 V7 Q15 6 16 7 V13 Q16 18 12 19 Z" fill="#eee"/></svg>
<div style="left:1395px;top:189.5px;width:20px;height:20px;background:rgba(25,25,25,0.45);border-radius:50%;"></div>
<svg style="left:1394px;top:188.5px;" width="22" height="22" viewBox="0 0 22 22"><circle cx="8" cy="8" r="3" fill="none" stroke="#eee" stroke-width="1.3"/><circle cx="14" cy="7" r="3" fill="none" stroke="#eee" stroke-width="1.3"/><rect x="6" y="12" width="9" height="6" fill="#eee"/><path d="M15 15 L19 12 V18 Z" fill="#eee"/></svg>
<div style="left:1395px;top:212.4px;width:20px;height:20px;background:rgba(25,25,25,0.45);border-radius:50%;"></div>
<svg style="left:1394px;top:211.4px;" width="22" height="22" viewBox="0 0 22 22"><path d="M7 6 H16 L18 17 H4 Z M5.5 9.5 H17 M5 13 H17.5 M10 6 L9 17 M13 6 L14 17" fill="none" stroke="#eee" stroke-width="1.1"/></svg>
<svg style="left:735px;top:390px;" width="24" height="24" viewBox="0 0 24 24"><circle cx="12" cy="12" r="5.2" fill="none" stroke="#f4f4f4" stroke-width="1.3" stroke-dasharray="2.7 1.4"/><circle cx="12" cy="12" r="5.2" fill="none" stroke="#e05050" stroke-width="1.3" stroke-dasharray="1.4 2.7" stroke-dashoffset="-2.7"/><path d="M12 2 V6 M12 18 V22 M2 12 H6 M18 12 H22" stroke="#222" stroke-width="1"/></svg>
<div style="left:1427px;top:77px;width:143px;height:650px;background:rgba(60,60,60,0.6);"></div>
<svg style="left:1433.0px;top:84.5px;" width="8" height="6" viewBox="0 0 8 6"><path d="M1 1.8 L4.0 4.5 L7 1.8" stroke="#bbb" stroke-width="1.2" fill="none"/></svg>
<span class="t" style="left:1444px;top:83.2px;font-size:8.6px;color:#dedede;">HDRi Maker <b style="font-weight:600">工作室</b></span>
<div style="left:1546px;top:86px;width:10px;height:1px;background:#555;"></div>
<div style="left:1546px;top:89px;width:10px;height:1px;background:#555;"></div>
<svg style="left:1468px;top:103.7px;" width="12" height="11" viewBox="0 0 12 11"><path d="M6 0.5 L11.5 10.5 H0.5 Z" fill="#e8e8e8"/><path d="M6 4 V7.5" stroke="#333" stroke-width="1.4"/><circle cx="6" cy="9" r="0.8" fill="#333"/></svg>
<span class="t" style="left:1482px;top:105.5px;font-size:8.3px;color:#c8c8c8;"><b style="font-weight:600">很重要</b></span>
<svg style="left:1512px;top:103.7px;" width="12" height="11" viewBox="0 0 12 11"><path d="M6 0.5 L11.5 10.5 H0.5 Z" fill="#e8e8e8"/><path d="M6 4 V7.5" stroke="#333" stroke-width="1.4"/><circle cx="6" cy="9" r="0.8" fill="#333"/></svg>
<svg style="left:1463.6px;top:118.7px;" width="12" height="11" viewBox="0 0 12 11"><path d="M6 0.5 L11.5 10.5 H0.5 Z" fill="#e8e8e8"/><path d="M6 4 V7.5" stroke="#333" stroke-width="1.4"/><circle cx="6" cy="9" r="0.8" fill="#333"/></svg>
<span class="t" style="left:1478px;top:120.5px;font-size:8.3px;color:#c8c8c8;"><b style="font-weight:600">可用更新</b></span>
<svg style="left:1515.5px;top:118.7px;" width="12" height="11" viewBox="0 0 12 11"><path d="M6 0.5 L11.5 10.5 H0.5 Z" fill="#e8e8e8"/><path d="M6 4 V7.5" stroke="#333" stroke-width="1.4"/><circle cx="6" cy="9" r="0.8" fill="#333"/></svg>
<div style="left:1434px;top:137px;width:126px;height:14.5px;background:#4a4a4a;border-radius:3px;"></div>
<svg style="left:1436px;top:138px;" width="12" height="12" viewBox="0 0 12 12"><circle cx="6" cy="6" r="3.3" fill="none" stroke="#eee" stroke-width="2.2" stroke-dasharray="1.6 1"/><circle cx="6" cy="6" r="1.3" fill="#eee"/></svg>
<span class="t" style="left:1303px;width:400px;text-align:center;top:140.0px;font-size:8.3px;color:#ddd;"><b style="font-weight:600">进入更新菜单</b></span>
<div style="left:1434px;top:156.4px;width:126px;height:14px;background:#4a4a4a;border-radius:3px;"></div>
<svg style="left:1436px;top:157.4px;" width="12" height="12" viewBox="0 0 12 12"><circle cx="6" cy="6" r="4.8" fill="none" stroke="#eee" stroke-width="1.4"/><path d="M4 4 L8 8 M8 4 L4 8" stroke="#eee" stroke-width="1.4"/></svg>
<span class="t" style="left:1303px;width:400px;text-align:center;top:159.2px;font-size:8.3px;color:#ddd;"><b style="font-weight:600">稍后提醒我</b></span>
<div style="left:1434px;top:177px;width:28px;height:13.5px;background:#4a4a4a;border-radius:3px;"></div>
<svg style="left:1436px;top:178px;" width="12" height="12" viewBox="0 0 12 12"><path d="M1 7 L6 2 L11 7 H9 V11 H3 V7 Z" fill="#3aa0e0"/></svg>
<span class="t" style="left:1450px;top:179.3px;font-size:8.3px;color:#ccc;"><b style="font-weight:600">帮</b></span>
<div style="left:1470px;top:177px;width:73px;height:13.5px;background:#2a2a2a;border-radius:3px;"></div>
<span class="t" style="left:1475px;top:179.2px;font-size:8.6px;color:#ddd;">HDRi Maker<b style="font-weight:600">库</b></span>
<svg style="left:1535.0px;top:181.0px;" width="8" height="6" viewBox="0 0 8 6"><path d="M1 1.8 L4.0 4.5 L7 1.8" stroke="#bbb" stroke-width="1.2" fill="none"/></svg>
<svg style="left:1545px;top:177px;" width="13" height="13" viewBox="0 0 13 13"><circle cx="6.5" cy="6.5" r="5.3" fill="none" stroke="#ddd" stroke-width="1.2"/><text x="6.5" y="9.8" font-size="9" text-anchor="middle" fill="#ddd" font-family="Liberation Sans">?</text></svg>
<div style="left:1434px;top:193.5px;width:28px;height:12.5px;background:#4a4a4a;border-radius:3px;"></div>
<span class="t" style="left:1438px;top:195.7px;font-size:8.3px;color:#bbb;"><b style="font-weight:600">类别</b>:</span>
<div style="left:1470px;top:193.5px;width:73px;height:12.5px;background:#2a2a2a;border-radius:3px;"></div>
<svg style="left:1474px;top:195px;" width="9" height="9" viewBox="0 0 9 9"><rect x="2" y="2" width="5" height="5" transform="rotate(45 4.5 4.5)" fill="#f0a020"/></svg>
<span class="t" style="left:1489px;top:195.7px;font-size:8.3px;color:#ddd;"><b style="font-weight:600">工具</b></span>
<svg style="left:1535.0px;top:197.3px;" width="8" height="6" viewBox="0 0 8 6"><path d="M1 1.8 L4.0 4.5 L7 1.8" stroke="#bbb" stroke-width="1.2" fill="none"/></svg>
<div style="left:1434px;top:212px;width:126px;height:12.5px;background:#4a4a4a;border-radius:3px;"></div>
<svg style="left:1491px;top:213px;" width="10" height="10" viewBox="0 0 10 10"><path d="M1 1.5 H9" stroke="#eee" stroke-width="1.3"/><path d="M5 3 L9 8 H1 Z" fill="#eee"/></svg>
<div style="left:1434px;top:231.6px;width:125px;height:134px;background:#4a4a4a;border-radius:3px;"></div>
<div style="left:1448px;top:231.6px;width:96px;height:134px;background:#282828;"></div>
<svg style="left:1437px;top:293px;" width="8" height="10" viewBox="0 0 8 10"><path d="M1 1 V9" stroke="#eee" stroke-width="1.3"/><path d="M7 1 V9 L2 5 Z" fill="#eee"/></svg>
<svg style="left:1548px;top:293px;" width="8" height="10" viewBox="0 0 8 10"><path d="M7 1 V9" stroke="#eee" stroke-width="1.3"/><path d="M1 1 V9 L6 5 Z" fill="#eee"/></svg>
<svg style="left:1448px;top:248px;" width="96" height="100" viewBox="0 0 96 100"><defs><linearGradient id="bl" gradientUnits="userSpaceOnUse" x1="0" y1="5" x2="0" y2="95"><stop offset="0" stop-color="#74c8f8"/><stop offset="0.55" stop-color="#2f93e0"/><stop offset="1" stop-color="#1565c0"/></linearGradient></defs>
<path d="M48 11 V64" stroke="url(#bl)" stroke-width="10" stroke-linecap="round"/>
<path d="M23 45 L48 68 L74 47" stroke="url(#bl)" stroke-width="10" stroke-linecap="round" stroke-linejoin="round" fill="none"/>
<path d="M9 66 V90 H88 V66" stroke="url(#bl)" stroke-width="10" stroke-linecap="round" stroke-linejoin="round" fill="none"/></svg>
<div style="left:1434px;top:371.6px;width:125px;height:13px;background:#4a4a4a;border-radius:3px;"></div>
<div style="left:1475px;top:372px;width:1px;height:12px;background:#333;"></div>
<div style="left:1517px;top:372px;width:1px;height:12px;background:#333;"></div>
<svg style="left:1447px;top:372px;" width="13" height="12" viewBox="0 0 13 12"><path d="M2 3 H11 M2 6 H11 M2 9 H11" stroke="#ddd" stroke-width="1"/><rect x="7" y="2" width="2" height="2" fill="#ddd"/><rect x="3" y="5" width="2" height="2" fill="#ddd"/><rect x="6" y="8" width="2" height="2" fill="#ddd"/></svg>
<svg style="left:1490px;top:373px;" width="10" height="10" viewBox="0 0 10 10"><path d="M1 8.5 H9" stroke="#eee" stroke-width="1.3"/><path d="M5 7 L9 2 H1 Z" fill="#eee"/></svg>
<svg style="left:1532px;top:372px;" width="12" height="12" viewBox="0 0 12 12"><path d="M3 4 H8 A3 3 0 0 1 8 10 H4" stroke="#ddd" stroke-width="1.2" fill="none"/><path d="M1 4 L4 1.5 V6.5 Z" fill="#ddd"/></svg>
<div style="left:1434px;top:388px;width:125px;height:18.7px;background:#2c2c2c;border-radius:3px;"></div>
<div style="left:1436px;top:389px;width:17px;height:16px;background:#505050;border-radius:3px;"></div>
<svg style="left:1438px;top:390px;" width="14" height="14" viewBox="0 0 14 14"><rect x="3" y="3" width="8" height="8" rx="1.5" transform="rotate(45 7 7)" fill="none" stroke="#eee" stroke-width="1.3"/></svg>
<svg style="left:1462px;top:390px;" width="13" height="13" viewBox="0 0 13 13"><circle cx="7.5" cy="5.5" r="3.5" fill="none" stroke="#ddd" stroke-width="1.2"/><path d="M5 8 L1.5 11.5" stroke="#ddd" stroke-width="1.5"/></svg>
<span class="t" style="left:1496px;top:393.2px;font-size:8.3px;color:#ddd;"><b style="font-weight:600">导入背景</b></span>
<div style="left:1434px;top:412.7px;width:125px;height:28.2px;background:#4a4a4a;border-radius:3px;"></div>
<div style="left:1496px;top:413px;width:1px;height:28px;background:#3a3a3a;"></div>
<svg style="left:1436px;top:420px;" width="12" height="13" viewBox="0 0 12 13"><rect x="1" y="1" width="10" height="11" rx="1.5" fill="#2f86d2"/><rect x="3" y="3" width="6" height="7" fill="#5fb6ef"/></svg>
<span class="t" style="left:1463px;top:422.7px;font-size:8.3px;color:#ddd;"><b style="font-weight:600">导入</b></span>
<svg style="left:1498px;top:420px;" width="13" height="13" viewBox="0 0 13 13"><circle cx="6.5" cy="6.5" r="6" fill="#2e8ae0"/><path d="M2 6 Q6 1 11 4" stroke="#8dd0ff" stroke-width="1.5" fill="none"/></svg>
<span class="t" style="left:1525px;top:422.7px;font-size:8.3px;color:#ddd;"><b style="font-weight:600">移除</b></span>
<svg style="left:1435.0px;top:454.4px;" width="6" height="8" viewBox="0 0 6 8"><path d="M1.8 1 L4.5 4.0 L1.8 7" stroke="#aaa" stroke-width="1.2" fill="none"/></svg>
<span class="t" style="left:1444px;top:454.2px;font-size:8.3px;color:#d0d0d0;"><b style="font-weight:600">世界环境</b></span>
<div style="left:1549px;top:456.9px;width:9px;height:1px;background:#4a4a4a;"></div>
<div style="left:1549px;top:459.9px;width:9px;height:1px;background:#4a4a4a;"></div>
<svg style="left:1435.0px;top:474.7px;" width="6" height="8" viewBox="0 0 6 8"><path d="M1.8 1 L4.5 4.0 L1.8 7" stroke="#aaa" stroke-width="1.2" fill="none"/></svg>
<span class="t" style="left:1444px;top:474.6px;font-size:8.3px;color:#d0d0d0;"><b style="font-weight:600">穹顶光</b></span>
<div style="left:1549px;top:477.2px;width:9px;height:1px;background:#4a4a4a;"></div>
<div style="left:1549px;top:480.2px;width:9px;height:1px;background:#4a4a4a;"></div>
<svg style="left:1435.0px;top:495.0px;" width="6" height="8" viewBox="0 0 6 8"><path d="M1.8 1 L4.5 4.0 L1.8 7" stroke="#aaa" stroke-width="1.2" fill="none"/></svg>
<span class="t" style="left:1444px;top:494.9px;font-size:8.3px;color:#d0d0d0;"><b style="font-weight:600">音量</b></span>
<div style="left:1549px;top:497.5px;width:9px;height:1px;background:#4a4a4a;"></div>
<div style="left:1549px;top:500.5px;width:9px;height:1px;background:#4a4a4a;"></div>
<svg style="left:1435.0px;top:515.3px;" width="6" height="8" viewBox="0 0 6 8"><path d="M1.8 1 L4.5 4.0 L1.8 7" stroke="#aaa" stroke-width="1.2" fill="none"/></svg>
<span class="t" style="left:1444px;top:515.1px;font-size:8.3px;color:#d0d0d0;"><b style="font-weight:600">阴影捕捉</b></span>
<div style="left:1549px;top:517.8px;width:9px;height:1px;background:#4a4a4a;"></div>
<div style="left:1549px;top:520.8px;width:9px;height:1px;background:#4a4a4a;"></div>
<svg style="left:1435.0px;top:535.6px;" width="6" height="8" viewBox="0 0 6 8"><path d="M1.8 1 L4.5 4.0 L1.8 7" stroke="#aaa" stroke-width="1.2" fill="none"/></svg>
<span class="t" style="left:1444px;top:535.5px;font-size:8.3px;color:#d0d0d0;"><b style="font-weight:600">保存</b></span>
<div style="left:1549px;top:538.1px;width:9px;height:1px;background:#4a4a4a;"></div>
<div style="left:1549px;top:541.1px;width:9px;height:1px;background:#4a4a4a;"></div>
<svg style="left:1435.0px;top:555.9px;" width="6" height="8" viewBox="0 0 6 8"><path d="M1.8 1 L4.5 4.0 L1.8 7" stroke="#aaa" stroke-width="1.2" fill="none"/></svg>
<span class="t" style="left:1444px;top:555.8px;font-size:8.3px;color:#d0d0d0;"><b style="font-weight:600">灯光</b></span>
<div style="left:1549px;top:558.4px;width:9px;height:1px;background:#4a4a4a;"></div>
<div style="left:1549px;top:561.4px;width:9px;height:1px;background:#4a4a4a;"></div>
<div style="left:1570px;top:75px;width:15px;height:652px;background:#1f1f1f;"></div>
<div style="left:1571px;top:77px;width:13px;height:28px;background:#2e2e2e;border-radius:0 3px 3px 0;"></div>
<span class="t" style="left:1563.0px;top:86.5px;width:29px;height:10px;font-size:8.5px;color:#c8c8c8;text-align:center;transform:rotate(90deg);">工具</span>
<div style="left:1571px;top:107px;width:13px;height:29px;background:#2e2e2e;border-radius:0 3px 3px 0;"></div>
<span class="t" style="left:1562.5px;top:117.0px;width:30px;height:10px;font-size:8.5px;color:#c8c8c8;text-align:center;transform:rotate(90deg);">视图</span>
<div style="left:1571px;top:138px;width:13px;height:30px;background:#2e2e2e;border-radius:0 3px 3px 0;"></div>
<span class="t" style="left:1562.0px;top:148.5px;width:31px;height:10px;font-size:8.5px;color:#c8c8c8;text-align:center;transform:rotate(90deg);">创建</span>
<div style="left:1571px;top:170px;width:13px;height:27px;background:#2e2e2e;border-radius:0 3px 3px 0;"></div>
<span class="t" style="left:1563.5px;top:179.0px;width:28px;height:10px;font-size:8.5px;color:#c8c8c8;text-align:center;transform:rotate(90deg);">命</span>
<div style="left:1571px;top:199px;width:13px;height:30px;background:#2e2e2e;border-radius:0 3px 3px 0;"></div>
<span class="t" style="left:1562.0px;top:209.5px;width:31px;height:10px;font-size:8.5px;color:#c8c8c8;text-align:center;transform:rotate(90deg);">CSDF</span>
<div style="left:1571px;top:231px;width:13px;height:60px;background:#2e2e2e;border-radius:0 3px 3px 0;"></div>
<span class="t" style="left:1547.0px;top:256.5px;width:61px;height:10px;font-size:8.5px;color:#c8c8c8;text-align:center;transform:rotate(90deg);">Geo-Scatter</span>
<div style="left:1571px;top:293px;width:13px;height:28px;background:#2e2e2e;border-radius:0 3px 3px 0;"></div>
<span class="t" style="left:1563.0px;top:302.5px;width:29px;height:10px;font-size:8.5px;color:#c8c8c8;text-align:center;transform:rotate(90deg);">✎</span>
<div style="left:1571px;top:323px;width:13px;height:26px;background:#2e2e2e;border-radius:0 3px 3px 0;"></div>
<span class="t" style="left:1564.0px;top:331.5px;width:27px;height:10px;font-size:8.5px;color:#c8c8c8;text-align:center;transform:rotate(90deg);">◇</span>
<div style="left:1571px;top:351px;width:13px;height:41px;background:#2e2e2e;border-radius:0 3px 3px 0;"></div>
<span class="t" style="left:1556.5px;top:367.0px;width:42px;height:10px;font-size:8.5px;color:#c8c8c8;text-align:center;transform:rotate(90deg);">即时清理</span>
<div style="left:1571px;top:394px;width:13px;height:23px;background:#2e2e2e;border-radius:0 3px 3px 0;"></div>
<span class="t" style="left:1565.5px;top:401.0px;width:24px;height:10px;font-size:8.5px;color:#c8c8c8;text-align:center;transform:rotate(90deg);">拓</span>
<div style="left:1571px;top:419px;width:13px;height:24px;background:#2e2e2e;border-radius:0 3px 3px 0;"></div>
<span class="t" style="left:1565.0px;top:426.5px;width:25px;height:10px;font-size:8.5px;color:#c8c8c8;text-align:center;transform:rotate(90deg);">QT</span>
<div style="left:1571px;top:445px;width:13px;height:24px;background:#2e2e2e;border-radius:0 3px 3px 0;"></div>
<span class="t" style="left:1565.0px;top:452.5px;width:25px;height:10px;font-size:8.5px;color:#c8c8c8;text-align:center;transform:rotate(90deg);">✎</span>
<div style="left:1571px;top:471px;width:13px;height:20px;background:#2e2e2e;border-radius:0 3px 3px 0;"></div>
<span class="t" style="left:1567.0px;top:476.5px;width:21px;height:10px;font-size:8.5px;color:#c8c8c8;text-align:center;transform:rotate(90deg);">ঠ</span>
<div style="left:1571px;top:493px;width:13px;height:21px;background:#2e2e2e;border-radius:0 3px 3px 0;"></div>
<span class="t" style="left:1566.5px;top:499.0px;width:22px;height:10px;font-size:8.5px;color:#c8c8c8;text-align:center;transform:rotate(90deg);">R</span>
<div style="left:1571px;top:516px;width:13px;height:24px;background:#2e2e2e;border-radius:0 3px 3px 0;"></div>
<span class="t" style="left:1565.0px;top:523.5px;width:25px;height:10px;font-size:8.5px;color:#c8c8c8;text-align:center;transform:rotate(90deg);">◩</span>
<div style="left:1571px;top:542px;width:13px;height:21px;background:#2e2e2e;border-radius:0 3px 3px 0;"></div>
<span class="t" style="left:1566.5px;top:548.0px;width:22px;height:10px;font-size:8.5px;color:#c8c8c8;text-align:center;transform:rotate(90deg);">编辑</span>
<div style="left:1571px;top:565px;width:13px;height:33px;background:#2e2e2e;border-radius:0 3px 3px 0;"></div>
<span class="t" style="left:1560.5px;top:577.0px;width:34px;height:10px;font-size:8.5px;color:#c8c8c8;text-align:center;transform:rotate(90deg);">任务栏</span>
<div style="left:1571px;top:600px;width:13px;height:27px;background:#2e2e2e;border-radius:0 3px 3px 0;"></div>
<span class="t" style="left:1563.5px;top:609.0px;width:28px;height:10px;font-size:8.5px;color:#c8c8c8;text-align:center;transform:rotate(90deg);">H</span>
<div style="left:1571px;top:629px;width:13px;height:24px;background:#2e2e2e;border-radius:0 3px 3px 0;"></div>
<span class="t" style="left:1565.0px;top:636.5px;width:25px;height:10px;font-size:8.5px;color:#c8c8c8;text-align:center;transform:rotate(90deg);">编</span>
<div style="left:1571px;top:655px;width:13px;height:24px;background:#2e2e2e;border-radius:0 3px 3px 0;"></div>
<span class="t" style="left:1565.0px;top:662.5px;width:25px;height:10px;font-size:8.5px;color:#c8c8c8;text-align:center;transform:rotate(90deg);">TT</span>
<div style="left:1571px;top:681px;width:13px;height:27px;background:#2e2e2e;border-radius:0 3px 3px 0;"></div>
<span class="t" style="left:1563.5px;top:690.0px;width:28px;height:10px;font-size:8.5px;color:#c8c8c8;text-align:center;transform:rotate(90deg);">◎</span>
<div style="left:1571px;top:710px;width:13px;height:16px;background:#2e2e2e;border-radius:0 3px 3px 0;"></div>
<span class="t" style="left:1569.0px;top:713.5px;width:17px;height:10px;font-size:8.5px;color:#c8c8c8;text-align:center;transform:rotate(90deg);">Rea</span>
<div style="left:0px;top:727px;width:1587px;height:2px;background:#161616;"></div>
<div style="left:0px;top:729px;width:1587px;height:334px;background:#1d1d1d;"></div>
<div style="left:7px;top:732px;width:23px;height:15px;background:#262626;border-radius:3px;"></div>
<svg style="left:9px;top:733px;" width="14" height="14" viewBox="0 0 14 14"><circle cx="7" cy="7" r="5.2" fill="none" stroke="#ddd" stroke-width="1.1"/><path d="M7 7 L7 3 A4 4 0 0 0 3.5 5 Z" fill="#ddd"/></svg>
<svg style="left:21.0px;top:737.0px;" width="8" height="6" viewBox="0 0 8 6"><path d="M1 1.8 L4.0 4.5 L7 1.8" stroke="#bbb" stroke-width="1.2" fill="none"/></svg>
<div style="left:36px;top:732px;width:61px;height:15px;background:#262626;border-radius:3px;"></div>
<svg style="left:37px;top:733px;" width="13" height="13" viewBox="0 0 13 13"><rect x="1" y="1" width="11" height="11" fill="none" stroke="#999" stroke-width="0.8"/><rect x="3" y="3" width="7" height="7" fill="#eee"/></svg>
<span class="t" style="left:53px;top:735.4px;font-size:8.3px;color:#d8d8d8;"><b style="font-weight:600">物体</b></span>
<svg style="left:87.0px;top:737.0px;" width="8" height="6" viewBox="0 0 8 6"><path d="M1 1.8 L4.0 4.5 L7 1.8" stroke="#bbb" stroke-width="1.2" fill="none"/></svg>
<svg style="left:101px;top:732px;" width="14" height="14" viewBox="0 0 14 14"><path d="M2 13 L6 9" stroke="#bbb" stroke-width="1.1"/><path d="M4 6.5 L8.5 11 L9 8 L11.5 5.5 L12.5 6 L13 5 L10 2 L9 3 L9.5 4 L7 6.5 Z" fill="none" stroke="#bbb" stroke-width="1"/></svg>
<svg style="left:1.0px;top:759.0px;" width="6" height="8" viewBox="0 0 6 8"><path d="M1.8 1 L4.5 4.0 L1.8 7" stroke="#aaa" stroke-width="1.2" fill="none"/></svg>
<div style="left:1416px;top:748px;width:2px;height:270px;background:#2b2b2b;"></div>
<div style="left:1421px;top:748px;width:150px;height:315px;background:#303030;"></div>
<div style="left:1488px;top:731px;width:15px;height:15px;background:#262626;border-radius:3px;"></div>
<svg style="left:1490px;top:733px;" width="11" height="11" viewBox="0 0 11 11"><path d="M3 1 V10 H9 V4" stroke="#555" fill="none"/></svg>
<div style="left:1508px;top:731px;width:15px;height:15px;background:#4a4a4a;border-radius:3px;"></div>
<svg style="left:1509px;top:732px;" width="13" height="13" viewBox="0 0 13 13"><g transform="rotate(40 6.5 6.5)"><path d="M3 12 V6 A3.5 3.5 0 0 1 10 6 V12 M5.2 12 V6.5 A1.3 1.3 0 0 1 7.8 6.5 V12" stroke="#aaa" stroke-width="0.9" fill="none"/></g></svg>
<div style="left:1523px;top:731px;width:24px;height:15px;background:#262626;border-radius:3px;"></div>
<svg style="left:1524px;top:732px;" width="12" height="12" viewBox="0 0 12 12"><rect x="1" y="1" width="4" height="4" fill="#eee"/><path d="M2 9 H11 M8 4 V11" stroke="#ccc" stroke-width="1"/></svg>
<svg style="left:1538.0px;top:736.0px;" width="8" height="6" viewBox="0 0 8 6"><path d="M1 1.8 L4.0 4.5 L7 1.8" stroke="#bbb" stroke-width="1.2" fill="none"/></svg>
<div style="left:1551px;top:731px;width:16px;height:15px;background:#4772b3;border-radius:3px;"></div>
<svg style="left:1552px;top:732px;" width="14" height="13" viewBox="0 0 14 13"><circle cx="5.5" cy="7.5" r="3.8" fill="none" stroke="#eee" stroke-width="1.2"/><circle cx="8" cy="5" r="3.6" fill="#dde"/></svg>
<svg style="left:1569.0px;top:736.0px;" width="8" height="6" viewBox="0 0 8 6"><path d="M1 1.8 L4.0 4.5 L7 1.8" stroke="#bbb" stroke-width="1.2" fill="none"/></svg>
<div style="left:1427px;top:749px;width:138px;height:69px;background:#383838;border-radius:4px;"></div>
<svg style="left:1432.0px;top:756.0px;" width="8" height="6" viewBox="0 0 8 6"><path d="M1 1.8 L4.0 4.5 L7 1.8" stroke="#bbb" stroke-width="1.2" fill="none"/></svg>
<span class="t" style="left:1444px;top:754.9px;font-size:8.3px;color:#d8d8d8;"><b style="font-weight:600">活动工具</b></span>
<div style="left:1552px;top:757px;width:9px;height:1px;background:#555;"></div>
<div style="left:1552px;top:760px;width:9px;height:1px;background:#555;"></div>
<svg style="left:1438px;top:773px;" width="18" height="17" viewBox="0 0 18 17"><rect x="1" y="1" width="15" height="15" fill="none" stroke="#d09a30" stroke-width="1.2" stroke-dasharray="2 1.6"/><path d="M6 5 L12 9 L9 10 L7.5 13 Z" fill="#eee"/></svg>
<span class="t" style="left:1462px;top:777.4px;font-size:8.3px;color:#ccc;"><b style="font-weight:600">框选</b></span>
<div style="left:1434px;top:797px;width:14px;height:14px;background:#4772b3;border-radius:2px 0 0 2px;"></div>
<svg style="left:1434px;top:797px;" width="14" height="14" viewBox="0 0 14 14"><rect x="2.5" y="2.5" width="9" height="9" fill="none" stroke="#eee" stroke-width="1" stroke-dasharray="1.5 1.2"/></svg>
<div style="left:1448px;top:797px;width:14px;height:14px;background:#3c3c3c;"></div>
<svg style="left:1448px;top:797px;" width="14" height="14" viewBox="0 0 14 14"><rect x="2" y="5" width="7" height="7" fill="#ddd"/><rect x="5" y="2" width="7" height="7" fill="#ddd"/></svg>
<div style="left:1462px;top:797px;width:14px;height:14px;background:#3c3c3c;border-radius:0 2px 2px 0;"></div>
<svg style="left:1462px;top:797px;" width="14" height="14" viewBox="0 0 14 14"><rect x="2" y="5" width="7" height="7" fill="none" stroke="#aaa" stroke-dasharray="1.5 1.2"/><rect x="5" y="2" width="7" height="7" fill="#ddd"/></svg>
<div style="left:1570px;top:749px;width:15px;height:314px;background:#1d1d1d;"></div>
<div style="left:1571px;top:752px;width:13px;height:32px;background:#2e2e2e;border-radius:0 3px 3px 0;"></div>
<span class="t" style="left:1561.0px;top:763.5px;width:33px;height:10px;font-size:8.5px;color:#c8c8c8;text-align:center;transform:rotate(90deg);">工具</span>
<div style="left:1571px;top:786px;width:13px;height:19px;background:#2e2e2e;border-radius:0 3px 3px 0;"></div>
<span class="t" style="left:1567.5px;top:791.0px;width:20px;height:10px;font-size:8.5px;color:#c8c8c8;text-align:center;transform:rotate(90deg);">R</span>
<div style="left:1571px;top:807px;width:13px;height:22px;background:#2e2e2e;border-radius:0 3px 3px 0;"></div>
<span class="t" style="left:1566.0px;top:813.5px;width:23px;height:10px;font-size:8.5px;color:#c8c8c8;text-align:center;transform:rotate(90deg);">◩</span>
<div style="left:1584px;top:37px;width:4px;height:1026px;background:#181818;"></div>
<div style="left:1588px;top:37px;width:332px;height:329px;background:#282828;"></div>
<div style="left:1588px;top:57.0px;width:332px;height:15.5px;background:#2b2b2b;"></div>
<div style="left:1588px;top:88.0px;width:332px;height:15.5px;background:#2b2b2b;"></div>
<div style="left:1588px;top:119.0px;width:332px;height:15.5px;background:#2b2b2b;"></div>
<div style="left:1588px;top:150.0px;width:332px;height:15.5px;background:#2b2b2b;"></div>
<div style="left:1588px;top:181.0px;width:332px;height:15.5px;background:#2b2b2b;"></div>
<div style="left:1588px;top:212.0px;width:332px;height:15.5px;background:#2b2b2b;"></div>
<div style="left:1588px;top:243.0px;width:332px;height:15.5px;background:#2b2b2b;"></div>
<div style="left:1588px;top:274.0px;width:332px;height:15.5px;background:#2b2b2b;"></div>
<div style="left:1588px;top:305.0px;width:332px;height:15.5px;background:#2b2b2b;"></div>
<div style="left:1588px;top:336.0px;width:332px;height:15.5px;background:#2b2b2b;"></div>
<div style="left:1596px;top:40px;width:24px;height:14px;background:#262626;border-radius:3px;"></div>
<svg style="left:1598px;top:41px;" width="14" height="12" viewBox="0 0 14 12"><rect x="1" y="0.5" width="4" height="3" fill="#eee"/><path d="M3 3.5 V10 H6 M3 6.5 H6" stroke="#ccc" stroke-width="0.9" fill="none"/><rect x="6" y="5" width="7" height="3" fill="#eee"/><rect x="6" y="9" width="7" height="3" fill="#eee"/></svg>
<svg style="left:1610.0px;top:44.0px;" width="8" height="6" viewBox="0 0 8 6"><path d="M1 1.8 L4.0 4.5 L7 1.8" stroke="#bbb" stroke-width="1.2" fill="none"/></svg>
<div style="left:1624px;top:40px;width:24px;height:14px;background:#262626;border-radius:3px;"></div>
<svg style="left:1625px;top:40px;" width="14" height="13" viewBox="0 0 14 13"><rect x="1" y="4" width="9" height="8" fill="#666"/><rect x="3" y="1" width="10" height="9" fill="#555" stroke="#ddd" stroke-width="0.9"/><path d="M4 9 L7 5 L9 7 L12 3" stroke="#eee" fill="none"/></svg>
<svg style="left:1637.0px;top:44.0px;" width="8" height="6" viewBox="0 0 8 6"><path d="M1 1.8 L4.0 4.5 L7 1.8" stroke="#bbb" stroke-width="1.2" fill="none"/></svg>
<div style="left:1656px;top:40px;width:204px;height:14px;background:#1f1f1f;border-radius:7px;"></div>
<svg style="left:1708px;top:41px;" width="10" height="12" viewBox="0 0 10 12"><path d="M2 1 A5 5 0 0 1 2 11" stroke="#ccc" stroke-width="1.1" fill="none"/></svg>
<div style="left:1868px;top:40px;width:24px;height:14px;background:#262626;border-radius:3px;"></div>
<svg style="left:1870px;top:41px;" width="12" height="12" viewBox="0 0 12 12"><path d="M1 2 H11 L7 7 V11 L5 10 V7 Z" fill="none" stroke="#ccc" stroke-width="1.1"/></svg>
<svg style="left:1882.0px;top:44.0px;" width="8" height="6" viewBox="0 0 8 6"><path d="M1 1.8 L4.0 4.5 L7 1.8" stroke="#bbb" stroke-width="1.2" fill="none"/></svg>
<svg style="left:1898px;top:40px;" width="16" height="14" viewBox="0 0 16 14"><rect x="2" y="5" width="9" height="7" fill="#ccc"/><circle cx="11" cy="4" r="3.3" fill="#ccc"/><path d="M11 2 V6 M9 4 H13" stroke="#333" stroke-width="1"/></svg>
<svg style="left:1603px;top:58px;" width="13" height="12" viewBox="0 0 13 12"><rect x="1" y="1" width="11" height="3" fill="#eee"/><rect x="1.5" y="5" width="10" height="6" fill="#eee"/><rect x="5" y="6.5" width="3" height="1.3" fill="#333"/></svg>
<span class="t" style="left:1620px;top:60.4px;font-size:8.3px;color:#cfcfcf;"><b style="font-weight:600">场景集合</b></span>
<svg style="left:1606.0px;top:77.0px;" width="8" height="6" viewBox="0 0 8 6"><path d="M1 1.8 L4.0 4.5 L7 1.8" stroke="#aaa" stroke-width="1.2" fill="none"/></svg>
<div style="left:1617px;top:73px;width:14px;height:14px;background:#3a3a3a;border-radius:2px;"></div>
<svg style="left:1618px;top:74px;" width="13" height="12" viewBox="0 0 13 12"><rect x="1" y="1" width="11" height="3" fill="#eee"/><rect x="1.5" y="5" width="10" height="6" fill="#eee"/><rect x="5" y="6.5" width="3" height="1.3" fill="#333"/></svg>
<span class="t" style="left:1636px;top:75.5px;font-size:9px;color:#d0d0d0;">Collection</span>
<svg style="left:1623.0px;top:91.5px;" width="6" height="8" viewBox="0 0 6 8"><path d="M1.8 1 L4.5 4.0 L1.8 7" stroke="#aaa" stroke-width="1.2" fill="none"/></svg>
<div style="left:1610px;top:88px;width:1px;height:14px;background:#3a3a3a;"></div>
<svg style="left:1633px;top:89px;" width="13" height="13" viewBox="0 0 13 13"><path d="M1.5 1.5 H11.5 L6.5 11.5 Z" fill="none" stroke="#e8912f" stroke-width="2.2" stroke-linejoin="round"/></svg>
<span class="t" style="left:1650px;top:91.2px;font-size:8.6px;color:#d0d0d0;">Plane</span>
<svg style="left:1687px;top:88px;" width="14" height="14" viewBox="0 0 14 14"><path d="M2.5 3 H11.5 L8.5 8 V12 H5.5 V8 Z" stroke="#2fb58a" stroke-width="1.3" fill="none"/><circle cx="2.5" cy="3" r="1.6" fill="#2fb58a"/><circle cx="11.5" cy="3" r="1.6" fill="#2fb58a"/><circle cx="7" cy="12" r="1.4" fill="#2fb58a"/></svg>
<svg style="left:1869px;top:73px;" width="12" height="12" viewBox="0 0 12 12"><rect x="1" y="1" width="10" height="10" rx="1.5" fill="#eee"/><path d="M3 6 L5 8.5 L9.5 3" stroke="#222" stroke-width="1.5" fill="none"/></svg>
<svg style="left:1883px;top:73.5px;" width="13" height="12" viewBox="0 0 13 12"><path d="M1 6 Q6.5 0 12 6 Q6.5 12 1 6 Z" fill="none" stroke="#eee" stroke-width="1.2"/><circle cx="6.5" cy="6" r="2" fill="#eee"/></svg>
<svg style="left:1898px;top:73.5px;" width="13" height="12" viewBox="0 0 13 12"><rect x="1" y="3" width="11" height="8" rx="1" fill="#eee"/><rect x="4" y="1.5" width="5" height="2" fill="#eee"/><circle cx="6.5" cy="7" r="2.3" fill="#333"/><circle cx="6.5" cy="7" r="1.2" fill="#eee"/></svg>
<svg style="left:1883px;top:89px;" width="13" height="12" viewBox="0 0 13 12"><path d="M1 6 Q6.5 0 12 6 Q6.5 12 1 6 Z" fill="none" stroke="#eee" stroke-width="1.2"/><circle cx="6.5" cy="6" r="2" fill="#eee"/></svg>
<svg style="left:1898px;top:89px;" width="13" height="12" viewBox="0 0 13 12"><rect x="1" y="3" width="11" height="8" rx="1" fill="#eee"/><rect x="4" y="1.5" width="5" height="2" fill="#eee"/><circle cx="6.5" cy="7" r="2.3" fill="#333"/><circle cx="6.5" cy="7" r="1.2" fill="#eee"/></svg>
<div style="left:1588px;top:366px;width:332px;height:2px;background:#161616;"></div>
<div style="left:1588px;top:368px;width:332px;height:695px;background:#2b2b2b;"></div>
<div style="left:1588px;top:368px;width:332px;height:17px;background:#2e2e2e;"></div>
<div style="left:1596px;top:370px;width:22px;height:14px;background:#262626;border-radius:3px;"></div>
<svg style="left:1597px;top:371px;" width="13" height="12" viewBox="0 0 13 12"><rect x="1" y="1" width="11" height="4.5" rx="2" fill="#eee"/><rect x="1" y="7" width="11" height="4.5" rx="2" fill="#eee"/><circle cx="9" cy="3.2" r="1.4" fill="#333"/><circle cx="4" cy="9.2" r="1.4" fill="#333"/></svg>
<svg style="left:1610.0px;top:374.0px;" width="8" height="6" viewBox="0 0 8 6"><path d="M1 1.8 L4.0 4.5 L7 1.8" stroke="#bbb" stroke-width="1.2" fill="none"/></svg>
<div style="left:1712px;top:371px;width:84px;height:12px;background:#222;border-radius:3px;"></div>
<svg style="left:1715px;top:371px;" width="12" height="12" viewBox="0 0 12 12"><circle cx="7" cy="5" r="3.5" fill="none" stroke="#ddd" stroke-width="1.1"/><path d="M4.5 7.5 L1 11" stroke="#ddd" stroke-width="1.3"/></svg>
<span class="t" style="left:1732px;top:373.0px;font-size:8px;color:#666;"><b style="font-weight:600">搜索</b></span>
<div style="left:1902px;top:371px;width:14px;height:12px;background:#262626;border-radius:3px;"></div>
<svg style="left:1904.0px;top:374.0px;" width="8" height="6" viewBox="0 0 8 6"><path d="M1 1.8 L4.0 4.5 L7 1.8" stroke="#bbb" stroke-width="1.2" fill="none"/></svg>
<div style="left:1588px;top:385px;width:21px;height:678px;background:#1d1d1d;"></div>
<div style="left:1589px;top:387px;width:20px;height:33px;background:#1a1a1a;"></div>
<div style="left:1589px;top:421px;width:20px;height:20px;background:#2f2f2f;"></div>
<svg style="left:1592px;top:396px;" width="14" height="14" viewBox="0 0 14 14"><path d="M3 4 V8 M3 9 Q3 12 4 12 Q5 12 5 9 Z" stroke="#ddd" fill="#ddd" stroke-width="1"/><path d="M9 3 Q7 5 9 7 V12 M9 7 Q11 5 9 3 M7.5 3 V5 M10.5 3 V5" stroke="#ddd" stroke-width="1.3" fill="none"/></svg>
<svg style="left:1592px;top:423px;" width="14" height="14" viewBox="0 0 14 14"><rect x="2" y="4" width="10" height="8" fill="none" stroke="#ddd" stroke-width="1.2"/><path d="M5 4 V2 H9 V4" stroke="#ddd" fill="none"/><rect x="9" y="6" width="2" height="3" fill="#ddd"/></svg>
<svg style="left:1592px;top:444px;" width="14" height="14" viewBox="0 0 14 14"><rect x="2" y="2" width="10" height="3" fill="#ddd"/><rect x="3" y="5" width="8" height="7" fill="none" stroke="#ddd" stroke-width="1.1"/><path d="M4 11 L7 7 L10 11" stroke="#ddd" fill="none"/></svg>
<svg style="left:1592px;top:465px;" width="14" height="14" viewBox="0 0 14 14"><rect x="1" y="4" width="9" height="8" fill="#666"/><rect x="3" y="2" width="9" height="8" fill="#555" stroke="#ddd" stroke-width="0.9"/><path d="M4 9 L7 5 L9 7 L11 4" stroke="#eee" fill="none"/></svg>
<svg style="left:1592px;top:485px;" width="14" height="14" viewBox="0 0 14 14"><path d="M5 2 Q8 6 8 8.5 A3 3 0 0 1 2 8.5 Q2 6 5 2 Z" fill="#ddd"/><circle cx="9" cy="9" r="2.6" fill="none" stroke="#ddd" stroke-width="1.2"/><circle cx="11" cy="3" r="1.4" fill="#ddd"/></svg>
<svg style="left:1592px;top:507px;" width="14" height="14" viewBox="0 0 14 14"><circle cx="7" cy="7" r="5" fill="#7a2a40"/><path d="M3 6 Q7 3 11 7 M5 11 Q8 8 10 11" stroke="#3a1020" stroke-width="1.2" fill="none"/></svg>
<svg style="left:1592px;top:534px;" width="14" height="14" viewBox="0 0 14 14"><rect x="2" y="2" width="10" height="3" fill="none" stroke="#ddd" stroke-width="1.1"/><rect x="2.5" y="5" width="9" height="7" fill="none" stroke="#ddd" stroke-width="1.1"/><path d="M5 7.5 H9" stroke="#ddd"/></svg>
<svg style="left:1592px;top:561px;" width="14" height="14" viewBox="0 0 14 14"><rect x="1" y="1" width="12" height="12" fill="#5a2030"/><path d="M1 1 h3 v3 h-3 z M7 1 h3 v3 h-3 z M4 4 h3 v3 h-3 z M10 4 h3 v3 h-3 z M1 7 h3 v3 h-3 z M7 7 h3 v3 h-3 z M4 10 h3 v3 h-3 z M10 10 h3 v3 h-3 z" fill="#d04070"/></svg>
<svg style="left:1616px;top:394px;" width="14" height="14" viewBox="0 0 14 14"><path d="M5 2 Q8 6 8 8.5 A3 3 0 0 1 2 8.5 Q2 6 5 2 Z" fill="#ddd"/><circle cx="9" cy="9.5" r="2.6" fill="none" stroke="#ddd" stroke-width="1.2"/><circle cx="11" cy="3.5" r="1.4" fill="#ddd"/></svg>
<span class="t" style="left:1634px;top:396.4px;font-size:8.6px;color:#d0d0d0;">Scene</span>
<svg style="left:1900px;top:393px;" width="13" height="13" viewBox="0 0 13 13"><path d="M4 9 L1 12 M3 7 L6 10 L11 5 L8 2 Z" stroke="#888" fill="none" stroke-width="1.1"/></svg>
<span class="t" style="right:189px;top:423.2px;font-size:8.3px;color:#c8c8c8;"><b style="font-weight:600">渲染引擎</b></span>
<div style="left:1739px;top:421px;width:174px;height:13px;background:#4772b3;border-radius:3px;"></div>
<span class="t" style="left:1744px;top:423.4px;font-size:8.3px;color:#f0f0f0;">EEVEE</span>
<svg style="left:1902.0px;top:425.0px;" width="8" height="6" viewBox="0 0 8 6"><path d="M1 1.8 L4.0 4.5 L7 1.8" stroke="#eee" stroke-width="1.2" fill="none"/></svg>
<div style="left:1614px;top:441px;width:299px;height:82px;background:#383838;border-radius:3px;"></div>
<svg style="left:1620.0px;top:449.0px;" width="8" height="6" viewBox="0 0 8 6"><path d="M1 1.8 L4.0 4.5 L7 1.8" stroke="#aaa" stroke-width="1.2" fill="none"/></svg>
<span class="t" style="left:1631px;top:447.8px;font-size:8.3px;color:#d0d0d0;"><b style="font-weight:600">采样</b></span>
<span class="t" style="right:188px;top:469.9px;font-size:8.3px;color:#c8c8c8;"><b style="font-weight:600">渲染</b></span>
<span class="t" style="right:188px;top:485.5px;font-size:8.3px;color:#c8c8c8;"><b style="font-weight:600">视图</b></span>
<div style="left:1740px;top:504px;width:9px;height:8.5px;background:#4772b3;border-radius:2px;"></div>
<svg style="left:1740px;top:504px;" width="9" height="9" viewBox="0 0 9 9"><path d="M1.5 4.5 L3.7 7 L7.8 2" stroke="#fff" stroke-width="1.4" fill="none"/></svg>
<span class="t" style="left:1752px;top:504.4px;font-size:8.3px;color:#cfcfcf;"><b style="font-weight:600">视图降噪</b></span>
<div style="left:1737px;top:436px;width:175px;height:68px;background:#181818;box-shadow:0 3px 6px rgba(0,0,0,0.5);"></div>
<div style="left:1739px;top:438px;width:171px;height:13.7px;background:#4a72b5;border-radius:3px;"></div>
<span class="t" style="left:1744px;top:440.4px;font-size:8.3px;color:#f4f4f4;">EEVEE</span>
<span class="t" style="left:1744px;top:456.9px;font-size:8.3px;color:#dcdcdc;"><b style="font-weight:600">工作台</b></span>
<span class="t" style="left:1744px;top:473.9px;font-size:8.6px;color:#dcdcdc;">Cycles</span>
<span class="t" style="left:1744px;top:490.1px;font-size:8.6px;color:#dcdcdc;">Conjure Vision</span>
<svg style="left:1779px;top:450px;" width="12" height="17" viewBox="0 0 12 17"><path d="M1.5 1.5 V13 L4.5 10.3 L7 15 L9 14 L6.6 9.5 H10.5 Z" fill="#fff" stroke="#000" stroke-width="1"/></svg>
<div style="left:1614px;top:523.5px;width:299px;height:19px;background:#383838;border-radius:3px;"></div>
<svg style="left:1621.0px;top:529.0px;" width="6" height="8" viewBox="0 0 6 8"><path d="M1.8 1 L4.5 4.0 L1.8 7" stroke="#aaa" stroke-width="1.2" fill="none"/></svg>
<div style="left:1631px;top:528.5px;width:9px;height:9px;background:#4a4a4a;border-radius:2px;"></div>
<span class="t" style="left:1642px;top:528.8px;font-size:8.4px;color:#d0d0d0;"><b style="font-weight:600">环境光遮蔽</b> (AO)</span>
<div style="left:1893px;top:531.5px;width:12px;height:1px;background:#444;"></div>
<div style="left:1893px;top:534.5px;width:12px;height:1px;background:#444;"></div>
<div style="left:1614px;top:543.75px;width:299px;height:19px;background:#383838;border-radius:3px;"></div>
<svg style="left:1621.0px;top:549.25px;" width="6" height="8" viewBox="0 0 6 8"><path d="M1.8 1 L4.5 4.0 L1.8 7" stroke="#aaa" stroke-width="1.2" fill="none"/></svg>
<div style="left:1631px;top:548.75px;width:9px;height:9px;background:#4a4a4a;border-radius:2px;"></div>
<span class="t" style="left:1642px;top:549.0px;font-size:8.4px;color:#d0d0d0;"><b style="font-weight:600">辉光</b></span>
<div style="left:1893px;top:551.75px;width:12px;height:1px;background:#444;"></div>
<div style="left:1893px;top:554.75px;width:12px;height:1px;background:#444;"></div>
<div style="left:1614px;top:564.0px;width:299px;height:19px;background:#383838;border-radius:3px;"></div>
<svg style="left:1621.0px;top:569.5px;" width="6" height="8" viewBox="0 0 6 8"><path d="M1.8 1 L4.5 4.0 L1.8 7" stroke="#aaa" stroke-width="1.2" fill="none"/></svg>
<span class="t" style="left:1631px;top:569.3px;font-size:8.4px;color:#d0d0d0;"><b style="font-weight:600">景深</b></span>
<div style="left:1893px;top:572.0px;width:12px;height:1px;background:#444;"></div>
<div style="left:1893px;top:575.0px;width:12px;height:1px;background:#444;"></div>
<div style="left:1614px;top:584.25px;width:299px;height:19px;background:#383838;border-radius:3px;"></div>
<svg style="left:1621.0px;top:589.75px;" width="6" height="8" viewBox="0 0 6 8"><path d="M1.8 1 L4.5 4.0 L1.8 7" stroke="#aaa" stroke-width="1.2" fill="none"/></svg>
<span class="t" style="left:1631px;top:589.5px;font-size:8.4px;color:#d0d0d0;"><b style="font-weight:600">次表面散射</b> (SSS)</span>
<div style="left:1893px;top:592.25px;width:12px;height:1px;background:#444;"></div>
<div style="left:1893px;top:595.25px;width:12px;height:1px;background:#444;"></div>
<div style="left:1614px;top:604.5px;width:299px;height:19px;background:#383838;border-radius:3px;"></div>
<svg style="left:1621.0px;top:610.0px;" width="6" height="8" viewBox="0 0 6 8"><path d="M1.8 1 L4.5 4.0 L1.8 7" stroke="#aaa" stroke-width="1.2" fill="none"/></svg>
<div style="left:1631px;top:609.5px;width:9px;height:9px;background:#4a4a4a;border-radius:2px;"></div>
<span class="t" style="left:1642px;top:609.8px;font-size:8.4px;color:#d0d0d0;"><b style="font-weight:600">屏幕空间反射</b></span>
<div style="left:1893px;top:612.5px;width:12px;height:1px;background:#444;"></div>
<div style="left:1893px;top:615.5px;width:12px;height:1px;background:#444;"></div>
<div style="left:1614px;top:624.75px;width:299px;height:19px;background:#383838;border-radius:3px;"></div>
<svg style="left:1621.0px;top:630.25px;" width="6" height="8" viewBox="0 0 6 8"><path d="M1.8 1 L4.5 4.0 L1.8 7" stroke="#aaa" stroke-width="1.2" fill="none"/></svg>
<div style="left:1631px;top:629.75px;width:9px;height:9px;background:#4a4a4a;border-radius:2px;"></div>
<span class="t" style="left:1642px;top:630.0px;font-size:8.4px;color:#d0d0d0;"><b style="font-weight:600">运动模糊</b></span>
<div style="left:1893px;top:632.75px;width:12px;height:1px;background:#444;"></div>
<div style="left:1893px;top:635.75px;width:12px;height:1px;background:#444;"></div>
<div style="left:1614px;top:645.0px;width:299px;height:19px;background:#383838;border-radius:3px;"></div>
<svg style="left:1621.0px;top:650.5px;" width="6" height="8" viewBox="0 0 6 8"><path d="M1.8 1 L4.5 4.0 L1.8 7" stroke="#aaa" stroke-width="1.2" fill="none"/></svg>
<span class="t" style="left:1631px;top:650.3px;font-size:8.4px;color:#d0d0d0;"><b style="font-weight:600">体积</b></span>
<div style="left:1893px;top:653.0px;width:12px;height:1px;background:#444;"></div>
<div style="left:1893px;top:656.0px;width:12px;height:1px;background:#444;"></div>
<div style="left:1614px;top:665.25px;width:299px;height:19px;background:#383838;border-radius:3px;"></div>
<svg style="left:1621.0px;top:670.75px;" width="6" height="8" viewBox="0 0 6 8"><path d="M1.8 1 L4.5 4.0 L1.8 7" stroke="#aaa" stroke-width="1.2" fill="none"/></svg>
<span class="t" style="left:1631px;top:670.5px;font-size:8.4px;color:#d0d0d0;"><b style="font-weight:600">性能</b></span>
<div style="left:1893px;top:673.25px;width:12px;height:1px;background:#444;"></div>
<div style="left:1893px;top:676.25px;width:12px;height:1px;background:#444;"></div>
<div style="left:1614px;top:685.5px;width:299px;height:19px;background:#383838;border-radius:3px;"></div>
<svg style="left:1621.0px;top:691.0px;" width="6" height="8" viewBox="0 0 6 8"><path d="M1.8 1 L4.5 4.0 L1.8 7" stroke="#aaa" stroke-width="1.2" fill="none"/></svg>
<span class="t" style="left:1631px;top:690.8px;font-size:8.4px;color:#d0d0d0;"><b style="font-weight:600">曲线</b></span>
<div style="left:1893px;top:693.5px;width:12px;height:1px;background:#444;"></div>
<div style="left:1893px;top:696.5px;width:12px;height:1px;background:#444;"></div>
<div style="left:1614px;top:705.75px;width:299px;height:19px;background:#383838;border-radius:3px;"></div>
<svg style="left:1621.0px;top:711.25px;" width="6" height="8" viewBox="0 0 6 8"><path d="M1.8 1 L4.5 4.0 L1.8 7" stroke="#aaa" stroke-width="1.2" fill="none"/></svg>
<span class="t" style="left:1631px;top:711.0px;font-size:8.4px;color:#d0d0d0;"><b style="font-weight:600">阴影</b></span>
<div style="left:1893px;top:713.75px;width:12px;height:1px;background:#444;"></div>
<div style="left:1893px;top:716.75px;width:12px;height:1px;background:#444;"></div>
<div style="left:1614px;top:726.0px;width:299px;height:19px;background:#383838;border-radius:3px;"></div>
<svg style="left:1621.0px;top:731.5px;" width="6" height="8" viewBox="0 0 6 8"><path d="M1.8 1 L4.5 4.0 L1.8 7" stroke="#aaa" stroke-width="1.2" fill="none"/></svg>
<span class="t" style="left:1631px;top:731.3px;font-size:8.4px;color:#d0d0d0;"><b style="font-weight:600">间接光照明</b></span>
<div style="left:1893px;top:734.0px;width:12px;height:1px;background:#444;"></div>
<div style="left:1893px;top:737.0px;width:12px;height:1px;background:#444;"></div>
<div style="left:1614px;top:746.25px;width:299px;height:19px;background:#383838;border-radius:3px;"></div>
<svg style="left:1621.0px;top:751.75px;" width="6" height="8" viewBox="0 0 6 8"><path d="M1.8 1 L4.5 4.0 L1.8 7" stroke="#aaa" stroke-width="1.2" fill="none"/></svg>
<span class="t" style="left:1631px;top:751.5px;font-size:8.4px;color:#d0d0d0;"><b style="font-weight:600">胶片</b></span>
<div style="left:1893px;top:754.25px;width:12px;height:1px;background:#444;"></div>
<div style="left:1893px;top:757.25px;width:12px;height:1px;background:#444;"></div>
<div style="left:1614px;top:766.5px;width:299px;height:19px;background:#383838;border-radius:3px;"></div>
<svg style="left:1621.0px;top:772.0px;" width="6" height="8" viewBox="0 0 6 8"><path d="M1.8 1 L4.5 4.0 L1.8 7" stroke="#aaa" stroke-width="1.2" fill="none"/></svg>
<div style="left:1631px;top:771.5px;width:9px;height:9px;background:#4a4a4a;border-radius:2px;"></div>
<span class="t" style="left:1642px;top:771.8px;font-size:8.4px;color:#d0d0d0;"><b style="font-weight:600">简化</b></span>
<div style="left:1893px;top:774.5px;width:12px;height:1px;background:#444;"></div>
<div style="left:1893px;top:777.5px;width:12px;height:1px;background:#444;"></div>
<div style="left:1614px;top:786.75px;width:299px;height:19px;background:#383838;border-radius:3px;"></div>
<svg style="left:1621.0px;top:792.25px;" width="6" height="8" viewBox="0 0 6 8"><path d="M1.8 1 L4.5 4.0 L1.8 7" stroke="#aaa" stroke-width="1.2" fill="none"/></svg>
<span class="t" style="left:1631px;top:792.0px;font-size:8.4px;color:#d0d0d0;"><b style="font-weight:600">蜡笔</b></span>
<div style="left:1893px;top:794.75px;width:12px;height:1px;background:#444;"></div>
<div style="left:1893px;top:797.75px;width:12px;height:1px;background:#444;"></div>
<div style="left:1614px;top:807.0px;width:299px;height:19px;background:#383838;border-radius:3px;"></div>
<svg style="left:1621.0px;top:812.5px;" width="6" height="8" viewBox="0 0 6 8"><path d="M1.8 1 L4.5 4.0 L1.8 7" stroke="#aaa" stroke-width="1.2" fill="none"/></svg>
<div style="left:1631px;top:812.0px;width:9px;height:9px;background:#4a4a4a;border-radius:2px;"></div>
<span class="t" style="left:1642px;top:812.3px;font-size:8.4px;color:#d0d0d0;">Freestyle</span>
<div style="left:1893px;top:815.0px;width:12px;height:1px;background:#444;"></div>
<div style="left:1893px;top:818.0px;width:12px;height:1px;background:#444;"></div>
<div style="left:1614px;top:827.25px;width:299px;height:19px;background:#383838;border-radius:3px;"></div>
<svg style="left:1621.0px;top:832.75px;" width="6" height="8" viewBox="0 0 6 8"><path d="M1.8 1 L4.5 4.0 L1.8 7" stroke="#aaa" stroke-width="1.2" fill="none"/></svg>
<span class="t" style="left:1631px;top:832.5px;font-size:8.4px;color:#d0d0d0;"><b style="font-weight:600">色彩管理</b></span>
<div style="left:1893px;top:835.25px;width:12px;height:1px;background:#444;"></div>
<div style="left:1893px;top:838.25px;width:12px;height:1px;background:#444;"></div>
<div style="left:1914px;top:385px;width:3px;height:678px;background:#2b2b2b;"></div>
<div style="left:0px;top:1061px;width:1420px;height:2px;background:#2e2e2e;"></div>
<div style="left:0px;top:1063px;width:1920px;height:17px;background:#1d1d1d;"></div>
<svg style="left:8px;top:1065px;" width="10" height="13" viewBox="0 0 10 13"><rect x="1" y="1" width="8" height="11" rx="4" fill="none" stroke="#bbb"/><rect x="1.5" y="1.5" width="3.5" height="5" fill="#bbb"/></svg>
<svg style="left:166px;top:1065px;" width="10" height="13" viewBox="0 0 10 13"><rect x="1" y="1" width="8" height="11" rx="4" fill="none" stroke="#bbb"/><rect x="4.2" y="2.5" width="1.6" height="3" fill="#bbb"/></svg>
<span class="t" style="left:184px;top:1067.6px;font-size:8.3px;color:#b8b8b8;"><b style="font-weight:600">平移视图</b></span>
<svg style="left:325px;top:1065px;" width="10" height="13" viewBox="0 0 10 13"><rect x="1" y="1" width="8" height="11" rx="4" fill="none" stroke="#bbb"/><rect x="5" y="1.5" width="3.5" height="5" fill="#bbb"/></svg>
<span class="t" style="left:342px;top:1067.6px;font-size:8.3px;color:#b8b8b8;"><b style="font-weight:600">上下文菜单</b></span>
<span class="t" style="right:9px;top:1068.0px;font-size:8.8px;color:#a8a8a8;">Collection | <b style="font-weight:600">顶点</b>:4 | <b style="font-weight:600">面</b>:1 | <b style="font-weight:600">三角面</b>:2 | <b style="font-weight:600">物体</b>:0/1 | <b style="font-weight:600">时长</b>: 00:10+10 (<b style="font-weight:600">帧</b> 1/250) | <b style="font-weight:600">内存</b>: 50.8 MiB | <b style="font-weight:600">显存</b>: 2.6/11.0 GiB | 4.1.1</span>
<span class="t" style="left:1643.6px;top:9.43px;font-size:51px;color:#cacaca;text-shadow:2px 2px 0 #000,-1.5px -1.5px 0 #000,1.5px -1.5px 0 #000,-1.5px 1.5px 0 #000,2px 0 0 #000,-2px 0 0 #000,0 2px 0 #000,0 -2px 0 #000,3px 3px 4px rgba(0,0,0,0.9),0 0 5px #000,0 0 9px rgba(0,0,0,0.7);transform-origin:0 43.17px;transform:scale(0.82,1.05);">Y</span>
<span class="t" style="left:1672.4px;top:9.43px;font-size:51px;color:#cacaca;text-shadow:2px 2px 0 #000,-1.5px -1.5px 0 #000,1.5px -1.5px 0 #000,-1.5px 1.5px 0 #000,2px 0 0 #000,-2px 0 0 #000,0 2px 0 #000,0 -2px 0 #000,3px 3px 4px rgba(0,0,0,0.9),0 0 5px #000,0 0 9px rgba(0,0,0,0.7);transform-origin:0 43.17px;transform:scale(1.05,1.0);">ı</span>
<span class="t" style="left:1685.4px;top:9.43px;font-size:51px;color:#cacaca;text-shadow:2px 2px 0 #000,-1.5px -1.5px 0 #000,1.5px -1.5px 0 #000,-1.5px 1.5px 0 #000,2px 0 0 #000,-2px 0 0 #000,0 2px 0 #000,0 -2px 0 #000,3px 3px 4px rgba(0,0,0,0.9),0 0 5px #000,0 0 9px rgba(0,0,0,0.7);transform-origin:0 43.17px;transform:scale(1.05,1.0);">ı</span>
<span class="t" style="left:1698.1px;top:9.43px;font-size:51px;color:#cacaca;text-shadow:2px 2px 0 #000,-1.5px -1.5px 0 #000,1.5px -1.5px 0 #000,-1.5px 1.5px 0 #000,2px 0 0 #000,-2px 0 0 #000,0 2px 0 #000,0 -2px 0 #000,3px 3px 4px rgba(0,0,0,0.9),0 0 5px #000,0 0 9px rgba(0,0,0,0.7);transform-origin:0 43.17px;transform:scale(0.937,1.05);">H</span>
<span class="t" style="left:1734.5px;top:9.43px;font-size:51px;color:#cacaca;text-shadow:2px 2px 0 #000,-1.5px -1.5px 0 #000,1.5px -1.5px 0 #000,-1.5px 1.5px 0 #000,2px 0 0 #000,-2px 0 0 #000,0 2px 0 #000,0 -2px 0 #000,3px 3px 4px rgba(0,0,0,0.9),0 0 5px #000,0 0 9px rgba(0,0,0,0.7);transform-origin:0 43.17px;transform:scale(0.977,1.0);">u</span>
<span class="t" style="left:1763.9px;top:9.43px;font-size:51px;color:#cacaca;text-shadow:2px 2px 0 #000,-1.5px -1.5px 0 #000,1.5px -1.5px 0 #000,-1.5px 1.5px 0 #000,2px 0 0 #000,-2px 0 0 #000,0 2px 0 #000,0 -2px 0 #000,3px 3px 4px rgba(0,0,0,0.9),0 0 5px #000,0 0 9px rgba(0,0,0,0.7);transform-origin:0 43.17px;transform:scale(0.977,1.0);">u</span>
<span class="t" style="left:1805.8px;top:9.43px;font-size:51px;color:#cacaca;text-shadow:2px 2px 0 #000,-1.5px -1.5px 0 #000,1.5px -1.5px 0 #000,-1.5px 1.5px 0 #000,2px 0 0 #000,-2px 0 0 #000,0 2px 0 #000,0 -2px 0 #000,3px 3px 4px rgba(0,0,0,0.9),0 0 5px #000,0 0 9px rgba(0,0,0,0.7);transform-origin:0 43.17px;transform:scale(1.0,1.0);">c</span>
<span class="t" style="left:1830.7px;top:9.43px;font-size:51px;color:#cacaca;text-shadow:2px 2px 0 #000,-1.5px -1.5px 0 #000,1.5px -1.5px 0 #000,-1.5px 1.5px 0 #000,2px 0 0 #000,-2px 0 0 #000,0 2px 0 #000,0 -2px 0 #000,3px 3px 4px rgba(0,0,0,0.9),0 0 5px #000,0 0 9px rgba(0,0,0,0.7);transform-origin:0 43.17px;transform:scale(1.033,1.0);">o</span>
<span class="t" style="left:1860.9px;top:9.43px;font-size:51px;color:#cacaca;text-shadow:2px 2px 0 #000,-1.5px -1.5px 0 #000,1.5px -1.5px 0 #000,-1.5px 1.5px 0 #000,2px 0 0 #000,-2px 0 0 #000,0 2px 0 #000,0 -2px 0 #000,3px 3px 4px rgba(0,0,0,0.9),0 0 5px #000,0 0 9px rgba(0,0,0,0.7);transform-origin:0 43.17px;transform:scale(1.031,1.0);">m</span>
<svg style="left:1670.5px;top:9.7px;" width="17.6" height="17.6"><circle cx="8.8" cy="8.8" r="6.3" fill="rgba(0,0,0,0.6)"/><circle cx="7.8" cy="7.8" r="4.4" fill="#000"/><circle cx="7.8" cy="7.8" r="2.8" fill="#cacaca"/></svg>
<svg style="left:1683.6000000000001px;top:9.7px;" width="17.6" height="17.6"><circle cx="8.8" cy="8.8" r="6.3" fill="rgba(0,0,0,0.6)"/><circle cx="7.8" cy="7.8" r="4.4" fill="#000"/><circle cx="7.8" cy="7.8" r="2.8" fill="#cacaca"/></svg>
<svg style="left:1790.7px;top:41.2px;" width="19.0" height="19.0"><circle cx="9.5" cy="9.5" r="7.0" fill="rgba(0,0,0,0.6)"/><circle cx="8.5" cy="8.5" r="5.1" fill="#000"/><circle cx="8.5" cy="8.5" r="3.5" fill="#cacaca"/></svg>
</body></html>
